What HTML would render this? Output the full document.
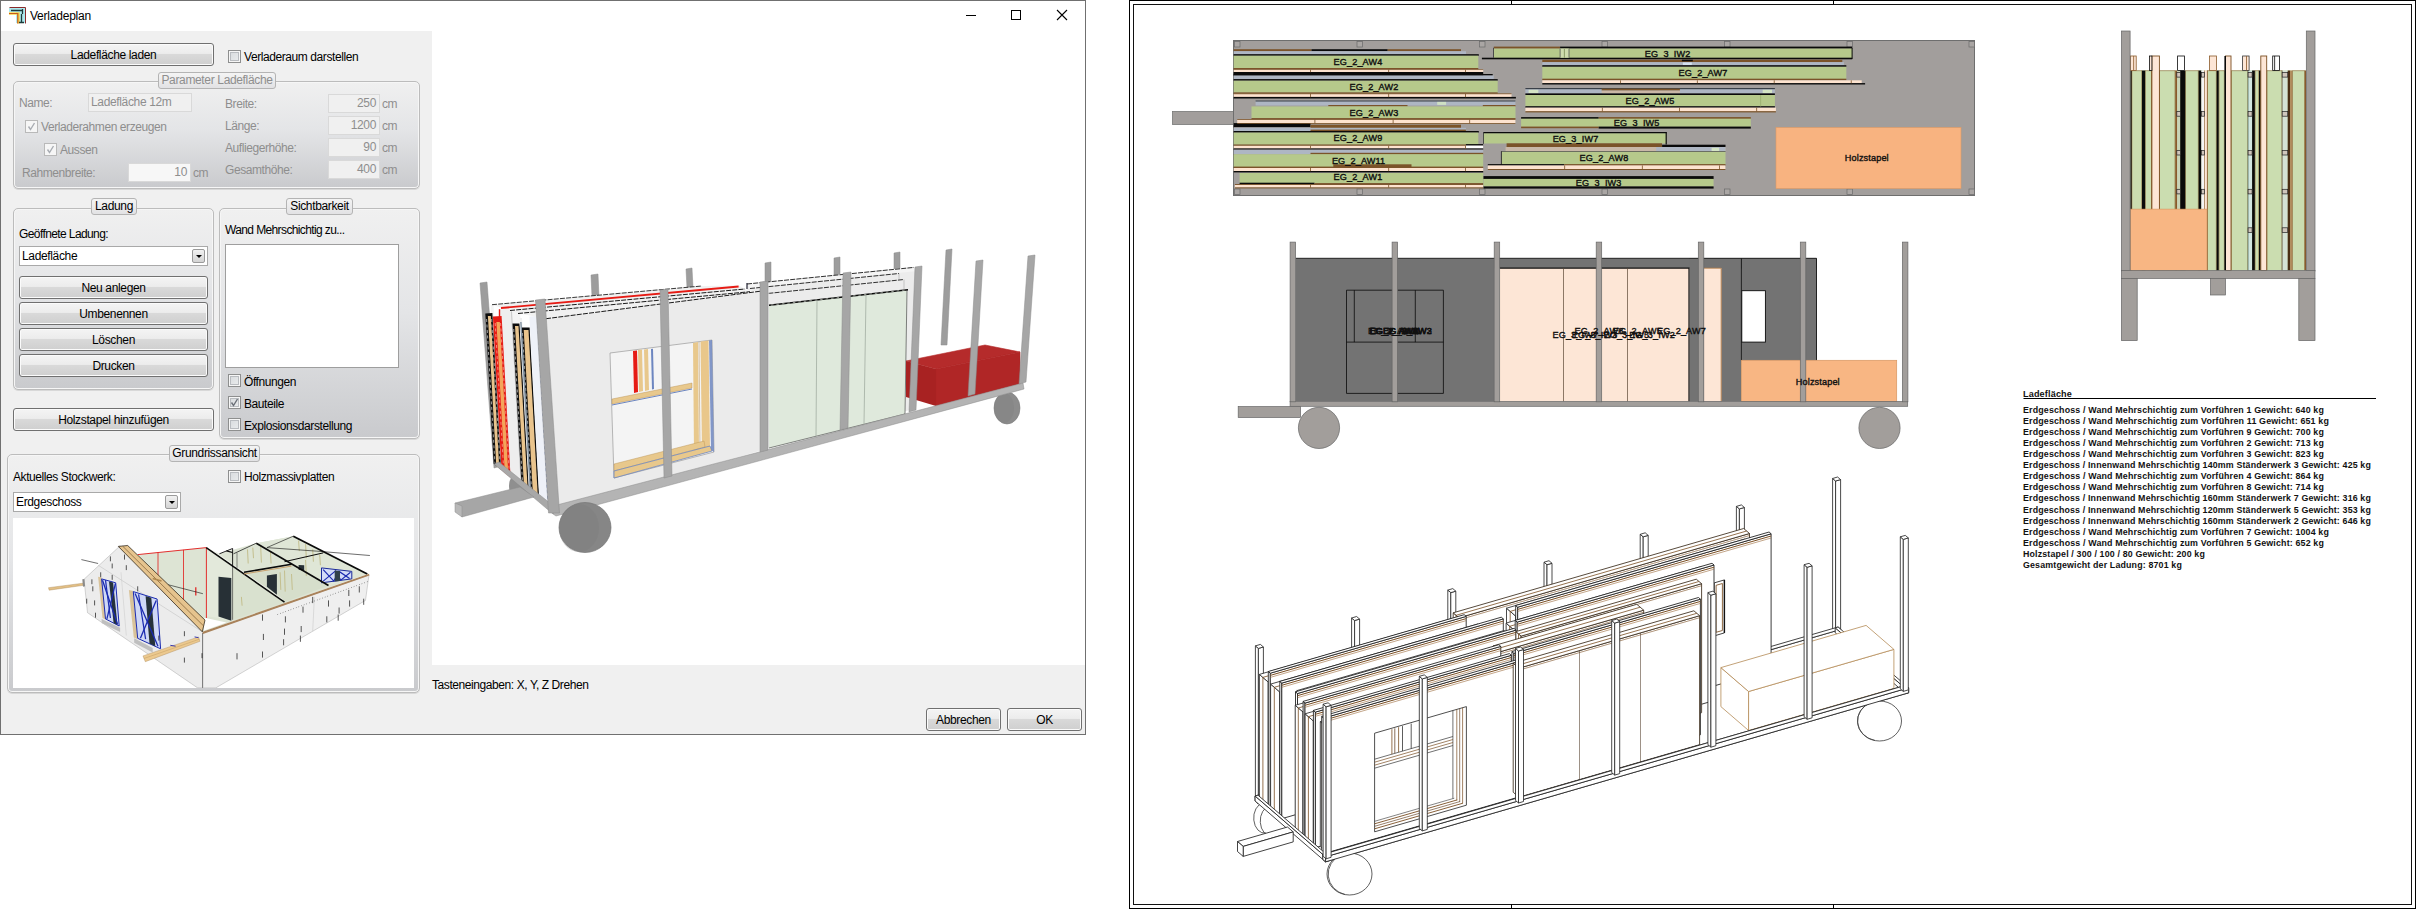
<!DOCTYPE html>
<html lang="de">
<head>
<meta charset="utf-8">
<title>Verladeplan</title>
<style>
html,body{margin:0;padding:0;background:#fff;}
body{width:2416px;height:909px;position:relative;overflow:hidden;font-family:"Liberation Sans",sans-serif;font-size:12px;color:#000;}
.abs{position:absolute;}
#dlg{position:absolute;left:0;top:0;width:1086px;height:735px;background:#fff;}
.bd{position:absolute;background:#707070;}
#title{position:absolute;left:30px;top:8px;font-size:12px;line-height:16px;white-space:nowrap;letter-spacing:-0.22px;}
#lpanel{position:absolute;left:1px;top:31px;width:431px;height:703px;background:#f0f0f0;}
#bpanel{position:absolute;left:432px;top:665px;width:653px;height:69px;background:#f0f0f0;}
.t{position:absolute;white-space:nowrap;font-size:12px;line-height:14px;letter-spacing:-0.42px;color:#000;}
.dis{color:#8e8e8e;}
.btn{position:absolute;box-sizing:border-box;border:1px solid #707070;border-radius:3px;
 background:linear-gradient(#f4f4f4 0%,#ececec 45%,#d9d9d9 50%,#cfcfcf 100%);
 box-shadow:inset 0 0 0 1px #fbfbfb;text-align:center;font-size:12px;letter-spacing:-0.35px;white-space:nowrap;}
.gb{position:absolute;box-sizing:border-box;border:1px solid #bcbcbc;border-radius:5px;
 background:linear-gradient(#f0f0f0 0%,#e4e5e7 45%,#c9cacd 100%);box-shadow:inset 0 0 0 1px #f6f6f6, 0 1px 0 #d8d8d8;}
.gl{position:absolute;box-sizing:border-box;border:1px solid #b4b4b4;border-radius:3px;background:linear-gradient(#f4f4f4,#e2e2e4);
 text-align:center;font-size:12px;line-height:15px;letter-spacing:-0.35px;white-space:nowrap;height:17px;}
.cb{position:absolute;width:13px;height:13px;box-sizing:border-box;border:1px solid #8e8f8f;background:linear-gradient(135deg,#d6d9dc,#eceeef);box-shadow:inset 0 0 0 1px #f6f6f6, inset 0 0 0 2px #b9bcc0;}
.cb.d{border-color:#b9b9b9;background:#f6f6f6;box-shadow:none;}
.tb{position:absolute;box-sizing:border-box;border:1px solid #d9d9d9;background:#f0f0f0;height:19px;font-size:12px;line-height:17px;letter-spacing:-0.35px;color:#8e8e8e;white-space:nowrap;}
.tb.r{text-align:right;padding-right:3px;}
.combo{position:absolute;box-sizing:border-box;border:1px solid #a9a9a9;background:#fff;height:20px;font-size:12px;line-height:19px;letter-spacing:-0.35px;padding-left:2px;white-space:nowrap;}
.combo i{position:absolute;right:2px;top:2px;width:13px;height:14px;box-sizing:border-box;border:1px solid #9a9a9a;border-radius:2px;background:linear-gradient(#f2f2f2,#d4d4d4);}
.combo i:after{content:"";position:absolute;left:3px;top:5px;border:3px solid transparent;border-top:3px solid #000;border-bottom:0;}
</style>
</head>
<body>
<div id="dlg">
 <div id="lpanel"></div>
 <div id="bpanel"></div>
 <svg class="abs" style="left:9px;top:7px" width="17" height="17" viewBox="0 0 17 17">
  <rect x="7" y="1" width="9" height="15" fill="#aee9ee"/><rect x="0" y="1" width="16" height="4" fill="#aee9ee"/>
  <path d="M0.5 0.5H16.5V16.5" fill="none" stroke="#8a2a2a" stroke-width="1"/>
  <path d="M0 6.5H9.5V16.5" fill="none" stroke="#f7d84a" stroke-width="2.4"/>
  <path d="M0 6.5H8.8V16.5" fill="none" stroke="#c65a1a" stroke-width="1.2"/>
  <path d="M2 3.5H14M13.5 2V7M12.5 7V16M10 15.5H15" fill="none" stroke="#1d3b3b" stroke-width="1.3"/>
 </svg>
 <div id="title">Verladeplan</div>
 <svg class="abs" style="left:961px;top:4px" width="120" height="22" viewBox="0 0 120 22">
  <path d="M5 11.5H15" stroke="#000" stroke-width="1"/>
  <rect x="50.5" y="6.5" width="9" height="9" fill="none" stroke="#000" stroke-width="1"/>
  <path d="M96 6L106 16M106 6L96 16" stroke="#000" stroke-width="1.1"/>
 </svg>

 <!-- top row -->
 <div class="btn" style="left:13px;top:43px;width:201px;height:23px;line-height:22px;">Ladefläche laden</div>
 <div class="cb" style="left:228px;top:50px"></div>
 <div class="t" style="left:244px;top:50px">Verladeraum darstellen</div>
 <!-- Parameter -->
 <div class="gb" style="left:13px;top:81px;width:407px;height:108px"></div>
 <div class="gl dis" style="left:158px;top:72px;width:118px;">Parameter Ladefläche</div>
 <div class="t dis" style="left:19px;top:96px">Name:</div>
 <div class="tb" style="left:88px;top:93px;width:104px;padding-left:2px;">Ladefläche 12m</div>
 <div class="cb d" style="left:25px;top:120px"></div>
 <svg class="abs" style="left:25px;top:120px" width="13" height="13"><path d="M3.5 6.5L5.5 9.5L9.5 3" fill="none" stroke="#a9adb3" stroke-width="1.4"/></svg>
 <div class="t dis" style="left:41px;top:120px">Verladerahmen erzeugen</div>
 <div class="cb d" style="left:44px;top:143px"></div>
 <svg class="abs" style="left:44px;top:143px" width="13" height="13"><path d="M3.5 6.5L5.5 9.5L9.5 3" fill="none" stroke="#a9adb3" stroke-width="1.4"/></svg>
 <div class="t dis" style="left:60px;top:143px">Aussen</div>
 <div class="t dis" style="left:22px;top:166px">Rahmenbreite:</div>
 <div class="tb r" style="left:128px;top:163px;width:63px;background:#f7f7f7">10</div>
 <div class="t dis" style="left:193px;top:166px">cm</div>
 <div class="t dis" style="left:225px;top:97px">Breite:</div>
 <div class="t dis" style="left:225px;top:119px">Länge:</div>
 <div class="t dis" style="left:225px;top:141px">Aufliegerhöhe:</div>
 <div class="t dis" style="left:225px;top:163px">Gesamthöhe:</div>
 <div class="tb r" style="left:328px;top:94px;width:52px;">250</div>
 <div class="tb r" style="left:328px;top:116px;width:52px;">1200</div>
 <div class="tb r" style="left:328px;top:138px;width:52px;">90</div>
 <div class="tb r" style="left:328px;top:160px;width:52px;">400</div>
 <div class="t dis" style="left:382px;top:97px">cm</div>
 <div class="t dis" style="left:382px;top:119px">cm</div>
 <div class="t dis" style="left:382px;top:141px">cm</div>
 <div class="t dis" style="left:382px;top:163px">cm</div>
 <!-- Ladung -->
 <div class="gb" style="left:13px;top:208px;width:201px;height:182px"></div>
 <div class="gl" style="left:91px;top:198px;width:46px;">Ladung</div>
 <div class="t" style="left:19px;top:227px;letter-spacing:-0.6px">Geöffnete Ladung:</div>
 <div class="combo" style="left:19px;top:246px;width:189px;">Ladefläche<i></i></div>
 <div class="btn" style="left:19px;top:276px;width:189px;height:23px;line-height:22px;">Neu anlegen</div>
 <div class="btn" style="left:19px;top:302px;width:189px;height:23px;line-height:22px;">Umbenennen</div>
 <div class="btn" style="left:19px;top:328px;width:189px;height:23px;line-height:22px;">Löschen</div>
 <div class="btn" style="left:19px;top:354px;width:189px;height:23px;line-height:22px;">Drucken</div>
 <div class="btn" style="left:13px;top:408px;width:201px;height:23px;line-height:22px;">Holzstapel hinzufügen</div>
 <!-- Sichtbarkeit -->
 <div class="gb" style="left:219px;top:208px;width:201px;height:231px"></div>
 <div class="gl" style="left:286px;top:198px;width:67px;">Sichtbarkeit</div>
 <div class="t" style="left:225px;top:223px;letter-spacing:-0.62px">Wand Mehrschichtig zu...</div>
 <div class="abs" style="left:225px;top:244px;width:174px;height:124px;box-sizing:border-box;border:1px solid #9e9e9e;background:#fff"></div>
 <div class="cb" style="left:228px;top:374px"></div>
 <div class="t" style="left:244px;top:375px">Öffnungen</div>
 <div class="cb" style="left:228px;top:396px"></div>
 <svg class="abs" style="left:228px;top:396px" width="13" height="13"><path d="M3.5 6.5L5.5 9.5L9.5 3" fill="none" stroke="#6a6f77" stroke-width="1.4"/></svg>
 <div class="t" style="left:244px;top:397px">Bauteile</div>
 <div class="cb" style="left:228px;top:418px"></div>
 <div class="t" style="left:244px;top:419px">Explosionsdarstellung</div>
 <!-- Grundrissansicht -->
 <div class="gb" style="left:7px;top:454px;width:413px;height:239px"></div>
 <div class="gl" style="left:169px;top:445px;width:91px;">Grundrissansicht</div>
 <div class="t" style="left:13px;top:470px">Aktuelles Stockwerk:</div>
 <div class="cb" style="left:228px;top:470px"></div>
 <div class="t" style="left:244px;top:470px">Holzmassivplatten</div>
 <div class="combo" style="left:13px;top:492px;width:168px;">Erdgeschoss<i></i></div>
 <div class="abs" id="thumb" style="left:13px;top:518px;width:401px;height:170px;background:#fff"></div>

 <!-- 3D trailer view -->
 <svg class="abs" style="left:432px;top:31px" width="653" height="634" viewBox="432 31 653 634">
  <g id="tr3d">
  <!-- far wheel (behind) -->
  <ellipse cx="521" cy="486" rx="12" ry="14" fill="#8f8f8f"/>
  <!-- far posts -->
  <g fill="#9d9d9d" stroke="#8a8a8a" stroke-width="0.5">
   <polygon points="480,283 487,282 501,466 494,468"/>
   <polygon points="591,275 598,274 599,297 592,297"/>
   <polygon points="686,269 692,268 693,288 687,288"/>
   <polygon points="765,263 771,262 771,284 765,284"/>
   <polygon points="834,258 840,257 840,284 834,284"/>
   <polygon points="894,253 900,252 900,277 894,277"/>
   <polygon points="946,250 952,249 947,345 941,345"/>
  </g>
  <!-- back panels stack left -->
  <polygon points="490.5,305.0 493.5,305.0 502.8,471.2 499.7,468.6" fill="#f4f4f4"/>
  <polygon points="485.3,313.6 492.4,313.0 501.2,469.8 493.7,463.8" fill="#0d0d0d"/>
  <polygon points="487.9,316.0 490.8,316.0 499.3,468.3 496.3,465.9" fill="#e9c48d"/>
  <path d="M486.6,319.0L494.9,462.8" stroke="#fff" stroke-width="0.6" stroke-dasharray="3 2.5" fill="none"/>
  <path d="M491.6,319.0L500.2,467.0" stroke="#fff" stroke-width="0.6" stroke-dasharray="3 2.5" fill="none"/>
  <polygon points="499.5,309.5 512.0,308.5 522.0,486.8 508.8,476.1" fill="#eeeeee"/>
  <polygon points="492.9,316.5 501.6,316.0 510.6,477.5 501.5,470.1" fill="#e61b14"/>
  <polygon points="496.4,322.0 499.8,322.0 508.4,475.7 504.8,472.8" fill="#f3a55a"/>
  <path d="M495.2,323.0L503.7,469.9" stroke="#ffd0c0" stroke-width="0.6" stroke-dasharray="3 2.5" fill="none"/>
  <path d="M500.6,323.0L509.4,474.5" stroke="#ffd0c0" stroke-width="0.6" stroke-dasharray="3 2.5" fill="none"/>
  <path d="M499.5,317V309.2" stroke="#e61b14" stroke-width="1.4"/>
  <polygon points="511.5,311.5 520.0,311.0 530.2,493.5 521.3,486.2" fill="#f4f4f4"/>
  <path d="M511.5,311.5L521.3,486.2" stroke="#9a9a9a" stroke-width="0.5"/>
  <polygon points="512.5,323.6 519.5,323.6 529.0,492.4 521.6,486.5" fill="#0d0d0d"/>
  <polygon points="515.0,326.0 518.5,326.0 527.8,491.5 524.1,488.5" fill="#e9c48d"/>
  <path d="M513.7,329.0L522.7,485.4" stroke="#fff" stroke-width="0.6" stroke-dasharray="3 2.5" fill="none"/>
  <polygon points="519.5,318.0 522.0,318.0 531.9,494.8 529.3,492.7" fill="#f0f0f0"/>
  <polygon points="521.5,327.5 529.6,327.5 539.3,500.9 530.8,494.0" fill="#0d0d0d"/>
  <polygon points="523.7,330.0 528.5,330.0 538.0,499.8 533.0,495.7" fill="#e9c48d"/>
  <path d="M522.5,333.0L531.7,492.7" stroke="#fff" stroke-width="0.6" stroke-dasharray="3 2.5" fill="none"/>
  <polygon points="520.2,322.0 521.6,322.0 531.2,494.3 529.8,493.1" fill="#8090a0"/>
  <polygon points="529.4,316.5 538.5,315.8 549.3,509.0 539.7,501.2" fill="#eef1f8"/>
  <polygon points="519.5,313.0 530.0,312.3 540.6,501.9 529.6,492.9" fill="#f3f3f3" opacity="0"/>
  <path d="M537.6,320.0L548.3,506.2" stroke="#5d77b8" stroke-width="1.1" stroke-dasharray="3 2.5" fill="none"/>
  <!-- top edges of stacked panels (left group) -->
  <polygon points="491.6,304.7 702,286 738.6,285.5 750,291.7 546,318.7 520,313.5" fill="#f1f1f1"/>
  <path d="M492,304.7L702,286" stroke="#222" stroke-width="0.9" stroke-dasharray="5 1.2" fill="none"/>
  <path d="M501,308L738.6,286.5" stroke="#e61b14" stroke-width="1.9" fill="none"/>
  <path d="M510,310.5L745,289M518,313.5L750,291.7" stroke="#1a1a1a" stroke-width="1" stroke-dasharray="5 1.2" fill="none"/>
  <!-- right back panels -->
  <polygon points="747,284 914,267 916,272 910,410 770,446 770,294 747,290" fill="#ececec"/>
  <polygon points="747,284 914,267 917,271 750,288.5" fill="#f4f4f4"/>
  <path d="M747,284L914,267.4M750,288.5L899,273.5" stroke="#1a1a1a" stroke-width="0.9" stroke-dasharray="5 1.2" fill="none"/>
  <path d="M747,283V289" stroke="#223" stroke-width="1.2"/>
  <path d="M768.4,293.4L904,279.5" stroke="#1a1a1a" stroke-width="0.9" stroke-dasharray="5 1.2" fill="none"/>
  <path d="M899,273.5L899,279M904,279.5L904,291" stroke="#aaa" stroke-width="0.6"/>
  
  <!-- main front white panel -->
  <polygon points="546,318.7 762,291 770,294 770,448 556,508" fill="#ebebeb"/>
  <path d="M546,318.7L762,291" stroke="#1a1a1a" stroke-width="1" stroke-dasharray="5 1.2"/>
  <!-- window opening -->
  <polygon points="610,353 712,340 714,452 614,478" fill="#f4f4f4" stroke="#8c8c8c" stroke-width="0.6"/>
  <polygon points="633,351 637,350.5 638,392 634,393" fill="#e61b14"/>
  <polygon points="638,350 642,349.5 643,391 639,392" fill="#e8c88c"/>
  <polygon points="644,349.5 648,349 649,390 645,391" fill="#e8c88c"/>
  <polygon points="651,349 653,348.7 654,389 652,389.5" fill="#6d86c0"/>
  <polygon points="612,399 692,383 692,388 612,404" fill="#e8c88c" stroke="#b48a4c" stroke-width="0.4"/>
  <path d="M612,405L692,389" stroke="#6d86c0" stroke-width="1"/>
  <polygon points="693,343 698,342 699,451 694,452" fill="#e8c88c"/>
  <polygon points="700.5,341.5 708.5,340.6 710,449 702,451" fill="#e9c78b"/>
  <path d="M699,342L700,451" stroke="#b48a4c" stroke-width="0.5"/>
  <polygon points="709,340.5 712,340 714,452 711,450" fill="#6d86c0" opacity="0.85"/>
  <polygon points="614,464 704,441 705,447 614,471" fill="#e8c88c" stroke="#b48a4c" stroke-width="0.4"/>
  <polygon points="614,471 710,446 712,451 614,478" fill="#e8c88c" stroke="#6d86c0" stroke-width="0.8"/>
  <!-- green panel -->
  <polygon points="769,305 907,290 905,414 769,448" fill="#dfe9dc"/>
  <path d="M769,305.3L908,289.8" stroke="#0a0a0a" stroke-width="1.6"/>
  <path d="M771,305.1L906,290" stroke="#e8eee4" stroke-width="0.6" stroke-dasharray="2.5 3"/>
  <path d="M907,290L905,414L769,448" stroke="#333" stroke-width="0.6" fill="none"/>
  <path d="M817,300L816,436M866,295L864,424" stroke="#9aa59a" stroke-width="0.7"/>
  <!-- red box -->
  <polygon points="906,361 985,345 1020,352 936,369" fill="#b52b2b" stroke="#b52b2b" stroke-width="0.6"/>
  <polygon points="936,369 1020,352 1020,384 936,406" fill="#b02626" stroke="#b02626" stroke-width="0.6"/>
  <polygon points="906,361 936,369 936,406 906,397" fill="#a82222"/>
  <!-- far wheel right -->
  <ellipse cx="1007" cy="408" rx="13" ry="16" fill="#8c8c8c" stroke="#7a7a7a" stroke-width="0.6"/>
  <ellipse cx="1004" cy="408" rx="10" ry="15" fill="#7d7d7d" opacity="0.35"/>
  <!-- deck rails -->
  <polygon points="553,506 1023,383 1024,389 556,516 553,514" fill="#b4b4b4" stroke="#8d8d8d" stroke-width="0.5"/>
  <polygon points="494,464 499,462 556,508 553,514" fill="#a8a8a8" stroke="#8d8d8d" stroke-width="0.5"/>
  <!-- drawbar -->
  <polygon points="455,503 520,487 534,497 462,517" fill="#a6a6a6" stroke="#8d8d8d" stroke-width="0.5"/>
  <polygon points="455,503 462,506 462,517 455,512" fill="#b8b8b8" stroke="#8d8d8d" stroke-width="0.5"/>
  <!-- near posts -->
  <g fill="#a6a6a6" stroke="#8b8b8b" stroke-width="0.5">
   <polygon points="535.5,300 545,299 559.5,513 548.5,513"/>
   <polygon points="660,290 668,289 672,476 664,478"/>
   <polygon points="760,282 768,281 768,450 760,452"/>
   <polygon points="843,273 851,272 848,428 840,430"/>
   <polygon points="915,267 922,266 916,410 909,412"/>
   <polygon points="976,261 983,260 975,394 968,396"/>
   <polygon points="1028,256 1035,255 1026,382 1019,384"/>
  </g>
  <!-- near wheel -->
  <ellipse cx="585" cy="527.5" rx="26" ry="25" fill="#868686" stroke="#747474" stroke-width="0.7"/>
  <ellipse cx="579" cy="528" rx="20" ry="24" fill="#7a7a7a" opacity="0.3"/>
  </g>
 </svg>
<!-- house thumbnail -->
<svg class="abs" style="left:13px;top:518px" width="401" height="170" viewBox="13 518 401 170">
<rect x="13" y="518" width="401" height="170" fill="#fff"/>
<polygon points="137.7,554.6 206.4,547.6 206.2,547.6 219.4,553.8 256.3,543.2 293.3,536.2 367.3,574.0 202.6,632.1 202.9,631.2" fill="#dde4d4" stroke="none" stroke-width="0.5"/>
<polygon points="206.2,547.6 232.6,567.0 232.6,619.8 206.2,616.3" fill="#e3e9db" stroke="none" stroke-width="0.5"/>
<polygon points="232.6,567.0 284.5,602.2 232.6,619.8" fill="#d9e1cf" stroke="none" stroke-width="0.5"/>
<polygon points="244.0,572.3 291.5,564.3 328.5,585.5 284.5,602.2" fill="#d6decb" stroke="none" stroke-width="0.5"/>
<polygon points="256.3,543.2 293.3,536.2 367.3,574.0 328.5,585.5" fill="#dfe6d6" stroke="none" stroke-width="0.5"/>
<polyline points="247.5,549.4 248.2,563.5" fill="none" stroke="#c4bf8e" stroke-width="1.0"/>
<polyline points="252.8,547.6 253.5,558.2" fill="none" stroke="#c4bf8e" stroke-width="1.0"/>
<polyline points="260.7,546.7 261.4,562.6" fill="none" stroke="#c4bf8e" stroke-width="1.0"/>
<polyline points="270.4,551.1 271.1,563.5" fill="none" stroke="#c4bf8e" stroke-width="1.0"/>
<polyline points="298.6,540.6 299.3,551.1" fill="none" stroke="#c4bf8e" stroke-width="1.0"/>
<polyline points="305.6,544.1 306.3,558.2" fill="none" stroke="#c4bf8e" stroke-width="1.0"/>
<polyline points="312.7,549.4 313.4,561.7" fill="none" stroke="#c4bf8e" stroke-width="1.0"/>
<polyline points="319.7,554.6 320.4,565.2" fill="none" stroke="#c4bf8e" stroke-width="1.0"/>
<polyline points="284.5,570.5 285.2,591.6" fill="none" stroke="#c4bf8e" stroke-width="1.0"/>
<polyline points="291.5,574.0 292.3,589.9" fill="none" stroke="#c4bf8e" stroke-width="1.0"/>
<polyline points="241.4,596.9 242.1,605.7" fill="none" stroke="#c4bf8e" stroke-width="1.0"/>
<polyline points="305.6,559.9 306.3,575.8" fill="none" stroke="#c4bf8e" stroke-width="1.0"/>
<polyline points="280.1,572.3 280.8,589.9" fill="none" stroke="#c4bf8e" stroke-width="1.0"/>
<polygon points="204.6,617.7 226.4,622.4 203.7,630.7" fill="#fff" stroke="none" stroke-width="0.5"/>
<polyline points="137.7,554.6 206.4,547.6 206.4,618.0" fill="none" stroke="#e21a1a" stroke-width="0.9"/>
<polyline points="158.0,552.5 158.0,582.8" fill="none" stroke="#e21a1a" stroke-width="0.8"/>
<polyline points="183.5,549.9 183.5,603.9" fill="none" stroke="#e21a1a" stroke-width="0.8"/>
<polyline points="195.8,587.2 195.8,595.5" fill="none" stroke="#e21a1a" stroke-width="1.2"/>
<polyline points="167.6,584.6 202.9,593.7" fill="none" stroke="#111" stroke-width="0.6"/>
<polygon points="218.5,576.7 231.3,577.9 231.3,620.7 218.5,616.6" fill="#273036" stroke="none" stroke-width="0.5"/>
<polygon points="266.9,575.4 276.9,574.0 276.9,594.8 266.9,586.7" fill="#273036" stroke="none" stroke-width="0.5"/>
<polygon points="298.6,564.9 304.2,565.2 304.2,570.8 298.6,569.8" fill="#273036" stroke="none" stroke-width="0.5"/>
<polygon points="321.5,567.9 351.8,571.4 351.8,578.9 321.5,582.8" fill="#d3dcf8" stroke="#1a2a9a" stroke-width="1.0"/>
<polyline points="323.2,569.6 333.8,581.1 339.1,571.4 349.6,578.4" fill="none" stroke="#1a2ab0" stroke-width="1.2"/>
<polyline points="323.2,581.1 335.6,570.8 340.8,580.2 350.5,572.3" fill="none" stroke="#1a2ab0" stroke-width="1.1"/>
<polygon points="334.7,570.5 340.0,571.0 340.0,581.1 334.7,581.6" fill="#30404a" stroke="none" stroke-width="0.5"/>
<polyline points="206.2,547.6 284.5,602.2" fill="none" stroke="#0a0a0a" stroke-width="1.6"/>
<polyline points="208.5,547.6 282.7,599.5" fill="none" stroke="#fff" stroke-width="0.5"/>
<polyline points="256.3,543.2 328.5,585.5" fill="none" stroke="#0a0a0a" stroke-width="1.6"/>
<polyline points="293.3,536.2 367.3,574.0" fill="none" stroke="#0a0a0a" stroke-width="1.8"/>
<polyline points="244.0,572.3 291.5,564.3" fill="none" stroke="#0a0a0a" stroke-width="1.6"/>
<polyline points="244.0,574.0 291.5,566.1" fill="none" stroke="#c79a62" stroke-width="0.9"/>
<polyline points="219.4,553.8 232.6,548.5 232.6,567.0" fill="none" stroke="#0a0a0a" stroke-width="0.9"/>
<polyline points="226.4,550.8 232.6,552.5" fill="none" stroke="#0a0a0a" stroke-width="1.2"/>
<polyline points="233.5,553.8 256.3,543.2" fill="none" stroke="#0a0a0a" stroke-width="0.7"/>
<polyline points="266.9,547.6 293.3,536.2" fill="none" stroke="#0a0a0a" stroke-width="0.6"/>
<polyline points="266.9,547.6 316.2,551.1 369.9,555.5" fill="none" stroke="#0a0a0a" stroke-width="0.6"/>
<polyline points="284.5,561.7 323.2,552.9" fill="none" stroke="#0a0a0a" stroke-width="1.0"/>
<polyline points="232.6,567.0 232.6,619.8" fill="none" stroke="#222" stroke-width="0.6"/>
<polyline points="237.0,552.9 237.0,567.9" fill="none" stroke="#222" stroke-width="0.5"/>
<polygon points="120.1,545.8 84.0,579.3 87.5,612.7 197.6,687.9 202.9,687.9 202.9,632.1" fill="#ececec" stroke="#9a9a9a" stroke-width="0.4"/>
<polyline points="98.1,565.2 202.9,632.1" fill="none" stroke="#bdbdbd" stroke-width="0.5"/>
<polyline points="121.0,572.3 126.3,635.6" fill="none" stroke="#c8c8c8" stroke-width="0.5"/>
<polygon points="202.6,633.0 369.0,574.9 365.5,600.4 215.8,687.9 202.6,687.9" fill="#efefef" stroke="#9a9a9a" stroke-width="0.4"/>
<polyline points="314.4,596.9 312.7,631.2" fill="none" stroke="#c2c2c2" stroke-width="0.5"/>
<polyline points="202.6,633.0 202.6,687.9" fill="none" stroke="#555" stroke-width="0.7"/>
<polygon points="202.6,631.8 369.0,573.7 369.4,575.4 203.0,633.9" fill="#a9825a" stroke="none" stroke-width="0.5"/>
<polygon points="118.3,546.4 127.7,545.5 205.0,620.1 202.3,631.8" fill="#e6c48e" stroke="#1a1208" stroke-width="0.7"/>
<polyline points="122.7,546.2 203.7,626.0" fill="none" stroke="#7a5a30" stroke-width="0.7"/>
<polyline points="152.7,578.4 161.5,581.1" fill="none" stroke="#b08850" stroke-width="1.6"/>
<polygon points="98.1,576.7 101.6,577.5 106.0,619.8 102.5,618.0" fill="#d9c39a" stroke="none" stroke-width="0.5"/>
<polygon points="101.6,578.9 115.7,582.8 119.2,626.0 105.5,618.9" fill="#cfd8f6" stroke="#1a2ab0" stroke-width="1.0"/>
<polygon points="109.0,581.4 113.1,582.5 117.5,625.1 113.6,623.0" fill="#26323a" stroke="none" stroke-width="0.5"/>
<polyline points="102.5,580.2 117.5,624.2" fill="none" stroke="#1a2ab0" stroke-width="1.3"/>
<polyline points="115.4,583.7 106.9,618.9" fill="none" stroke="#1a2ab0" stroke-width="1.3"/>
<polyline points="105.5,580.2 110.4,618.0" fill="none" stroke="#1a2ab0" stroke-width="1.2"/>
<polygon points="101.6,618.9 120.1,627.7 120.1,632.1 101.6,623.0" fill="#bfbfbf" stroke="none" stroke-width="0.5"/>
<polygon points="128.9,589.9 133.3,591.1 137.7,639.2 133.8,637.4" fill="#d9c39a" stroke="none" stroke-width="0.5"/>
<polygon points="133.3,591.6 157.1,599.0 160.6,648.8 137.7,638.3" fill="#cfd8f6" stroke="#1a2ab0" stroke-width="1.0"/>
<polygon points="145.6,596.0 151.3,597.8 155.3,646.2 149.5,643.6" fill="#26323a" stroke="none" stroke-width="0.5"/>
<polyline points="135.1,593.4 158.0,646.2" fill="none" stroke="#1a2ab0" stroke-width="1.3"/>
<polyline points="156.2,600.4 140.4,638.3" fill="none" stroke="#1a2ab0" stroke-width="1.3"/>
<polyline points="138.6,594.3 145.6,639.2" fill="none" stroke="#1a2ab0" stroke-width="1.2"/>
<polygon points="134.2,638.3 152.7,648.0 152.7,652.4 134.2,642.7" fill="#bfbfbf" stroke="none" stroke-width="0.5"/>
<polyline points="110.4,556.4 110.4,561.3" fill="none" stroke="#111" stroke-width="0.7"/>
<polyline points="112.2,563.5 112.2,568.4" fill="none" stroke="#111" stroke-width="0.7"/>
<polyline points="124.5,554.6 124.5,559.6" fill="none" stroke="#111" stroke-width="0.7"/>
<polyline points="126.3,565.2 126.3,570.1" fill="none" stroke="#111" stroke-width="0.7"/>
<polyline points="100.7,572.3 100.7,577.2" fill="none" stroke="#111" stroke-width="0.7"/>
<polyline points="112.2,574.9 112.2,579.8" fill="none" stroke="#111" stroke-width="0.7"/>
<polyline points="91.9,579.3 91.9,584.2" fill="none" stroke="#111" stroke-width="0.7"/>
<polyline points="92.8,586.3 92.8,591.3" fill="none" stroke="#111" stroke-width="0.7"/>
<polyline points="94.6,600.4 94.6,605.4" fill="none" stroke="#111" stroke-width="0.7"/>
<polyline points="95.5,612.7 95.5,617.7" fill="none" stroke="#111" stroke-width="0.7"/>
<polyline points="137.7,586.3 137.7,591.3" fill="none" stroke="#111" stroke-width="0.7"/>
<polyline points="158.8,635.6 158.8,640.6" fill="none" stroke="#111" stroke-width="0.7"/>
<polyline points="184.4,631.2 184.4,636.2" fill="none" stroke="#111" stroke-width="0.7"/>
<polyline points="184.4,657.6 184.4,662.6" fill="none" stroke="#111" stroke-width="0.7"/>
<polyline points="202.0,653.2 202.0,658.2" fill="none" stroke="#111" stroke-width="0.7"/>
<polyline points="86.7,598.7 86.7,603.6" fill="none" stroke="#111" stroke-width="0.7"/>
<polyline points="237.0,653.2 237.0,659.4" fill="none" stroke="#111" stroke-width="0.7"/>
<polyline points="262.5,651.5 262.5,657.6" fill="none" stroke="#111" stroke-width="0.7"/>
<polyline points="263.4,633.9 263.4,640.0" fill="none" stroke="#111" stroke-width="0.7"/>
<polyline points="283.6,639.2 283.6,645.3" fill="none" stroke="#111" stroke-width="0.7"/>
<polyline points="284.5,628.6 284.5,634.8" fill="none" stroke="#111" stroke-width="0.7"/>
<polyline points="300.4,635.6 300.4,641.8" fill="none" stroke="#111" stroke-width="0.7"/>
<polyline points="301.2,626.0 301.2,632.1" fill="none" stroke="#111" stroke-width="0.7"/>
<polyline points="285.4,616.3 285.4,622.4" fill="none" stroke="#111" stroke-width="0.7"/>
<polyline points="303.0,606.6 303.0,612.7" fill="none" stroke="#111" stroke-width="0.7"/>
<polyline points="328.5,600.4 328.5,606.6" fill="none" stroke="#111" stroke-width="0.7"/>
<polyline points="326.8,616.3 326.8,622.4" fill="none" stroke="#111" stroke-width="0.7"/>
<polyline points="339.1,607.5 339.1,613.6" fill="none" stroke="#111" stroke-width="0.7"/>
<polyline points="338.2,614.5 338.2,620.7" fill="none" stroke="#111" stroke-width="0.7"/>
<polyline points="349.6,600.4 349.6,606.6" fill="none" stroke="#111" stroke-width="0.7"/>
<polyline points="348.8,589.9 348.8,596.0" fill="none" stroke="#111" stroke-width="0.7"/>
<polyline points="359.3,586.3 359.3,592.5" fill="none" stroke="#111" stroke-width="0.7"/>
<polyline points="363.7,598.7 363.7,604.8" fill="none" stroke="#111" stroke-width="0.7"/>
<polyline points="262.5,614.5 262.5,620.7" fill="none" stroke="#111" stroke-width="0.7"/>
<polyline points="312.7,596.9 312.7,603.1" fill="none" stroke="#111" stroke-width="0.7"/>
<polyline points="277.5,614.5 369.0,581.1" fill="none" stroke="#222" stroke-width="0.7" stroke-dasharray="0.6 2.2"/>
<polygon points="48.5,587.7 83.1,583.2 83.7,585.3 49.2,590.2" fill="#e2bf85" stroke="#a88654" stroke-width="0.4"/>
<polygon points="82.3,579.3 84.4,578.9 85.1,586.3 83.0,586.7" fill="#8a8a8a" stroke="none" stroke-width="0.5"/>
<polygon points="143.0,655.9 198.5,636.9 199.9,641.3 145.3,661.7" fill="#ecc98f" stroke="#a88654" stroke-width="0.4"/>
<polyline points="143.9,658.5 199.3,639.2" fill="none" stroke="#c9a468" stroke-width="0.6"/>
<polyline points="170.3,645.3 175.6,646.2" fill="none" stroke="#3a3ab0" stroke-width="1.0"/>
<polyline points="194.6,636.9 198.5,637.7" fill="none" stroke="#3a3ab0" stroke-width="1.0"/>
<polyline points="81.4,559.6 98.1,563.5" fill="none" stroke="#111" stroke-width="0.6"/>
</svg>
 <!-- bottom -->
 <div class="t" style="left:432px;top:678px">Tasteneingaben: X, Y, Z Drehen</div>
 <div class="btn" style="left:926px;top:708px;width:75px;height:23px;line-height:22px;">Abbrechen</div>
 <div class="btn" style="left:1007px;top:708px;width:75px;height:23px;line-height:22px;">OK</div>
 <div class="bd" style="left:0;top:0;width:1086px;height:1px"></div>
 <div class="bd" style="left:0;top:0;width:1px;height:735px"></div>
 <div class="bd" style="left:1085px;top:0;width:1px;height:735px"></div>
 <div class="bd" style="left:0;top:734px;width:1086px;height:1px"></div>
</div>
<!-- sheet frame + plan -->
<svg class="abs" style="left:1120px;top:0" width="1296" height="909" viewBox="1120 0 1296 909" font-family="Liberation Sans, sans-serif">
<rect x="1129.5" y="0.5" width="1286" height="908" fill="#fff" stroke="#000" stroke-width="1"/>
<rect x="1133.5" y="4.5" width="1278" height="900" fill="none" stroke="#111" stroke-width="1"/>
<path d="M1511.5 0V4M1833.5 0V4M1511.5 904V908M1833.5 904V908" stroke="#000" stroke-width="1"/>
<g id="plan">
<rect x="1172.5" y="111.5" width="61.5" height="13.0" fill="#a29e9c" stroke="#777" stroke-width="0.8"/>
<rect x="1233.5" y="40.5" width="741.0" height="155.0" fill="#a29e9c" stroke="#6e6e6e" stroke-width="1"/>
<rect x="1234.5" y="41.5" width="5.5" height="5.5" fill="#aaa6a4" stroke="#6a6a6a" stroke-width="0.7"/>
<rect x="1234.5" y="189.0" width="5.5" height="5.5" fill="#aaa6a4" stroke="#6a6a6a" stroke-width="0.7"/>
<rect x="1357.0" y="41.5" width="5.5" height="5.5" fill="#aaa6a4" stroke="#6a6a6a" stroke-width="0.7"/>
<rect x="1357.0" y="189.0" width="5.5" height="5.5" fill="#aaa6a4" stroke="#6a6a6a" stroke-width="0.7"/>
<rect x="1479.5" y="41.5" width="5.5" height="5.5" fill="#aaa6a4" stroke="#6a6a6a" stroke-width="0.7"/>
<rect x="1479.5" y="189.0" width="5.5" height="5.5" fill="#aaa6a4" stroke="#6a6a6a" stroke-width="0.7"/>
<rect x="1602.0" y="41.5" width="5.5" height="5.5" fill="#aaa6a4" stroke="#6a6a6a" stroke-width="0.7"/>
<rect x="1602.0" y="189.0" width="5.5" height="5.5" fill="#aaa6a4" stroke="#6a6a6a" stroke-width="0.7"/>
<rect x="1724.5" y="41.5" width="5.5" height="5.5" fill="#aaa6a4" stroke="#6a6a6a" stroke-width="0.7"/>
<rect x="1724.5" y="189.0" width="5.5" height="5.5" fill="#aaa6a4" stroke="#6a6a6a" stroke-width="0.7"/>
<rect x="1847.0" y="41.5" width="5.5" height="5.5" fill="#aaa6a4" stroke="#6a6a6a" stroke-width="0.7"/>
<rect x="1847.0" y="189.0" width="5.5" height="5.5" fill="#aaa6a4" stroke="#6a6a6a" stroke-width="0.7"/>
<rect x="1969.0" y="41.5" width="5.5" height="5.5" fill="#aaa6a4" stroke="#6a6a6a" stroke-width="0.7"/>
<rect x="1969.0" y="189.0" width="5.5" height="5.5" fill="#aaa6a4" stroke="#6a6a6a" stroke-width="0.7"/>
<rect x="1233.7" y="49.2" width="77.8" height="2.0" fill="#7b5329"/>
<rect x="1311.5" y="49.2" width="76.2" height="2.0" fill="#0a0a0a"/>
<rect x="1387.7" y="49.2" width="73.3" height="2.0" fill="#7b5329"/>
<rect x="1233.7" y="51.2" width="232.3" height="3.0" fill="#aeb6c3"/>
<rect x="1233.7" y="54.2" width="245.1" height="1.6" fill="#0a0a0a"/>
<rect x="1233.7" y="55.7" width="244.6" height="12.5" fill="#b6c98b"/>
<rect x="1233.7" y="68.0" width="244.6" height="1.6" fill="#7b5329"/>
<rect x="1233.7" y="69.6" width="249.5" height="2.6" fill="#fde3cf"/>
<rect x="1233.7" y="72.0" width="249.5" height="3.6" fill="#0a0a0a"/>
<rect x="1233.7" y="69.2" width="249.5" height="0.6" fill="#7b5329"/>
<rect x="1233.7" y="74.0" width="259.0" height="1.6" fill="#0a0a0a"/>
<rect x="1233.7" y="75.5" width="260.0" height="3.6" fill="#aeb6c3"/>
<rect x="1233.7" y="79.1" width="264.0" height="1.6" fill="#0a0a0a"/>
<rect x="1233.7" y="80.7" width="264.0" height="11.9" fill="#b6c98b"/>
<rect x="1233.7" y="92.4" width="264.0" height="1.4" fill="#7b5329"/>
<rect x="1233.7" y="93.8" width="277.8" height="3.4" fill="#fde3cf"/>
<rect x="1233.7" y="93.4" width="277.8" height="0.8" fill="#7b5329"/>
<rect x="1233.7" y="96.9" width="282.2" height="1.6" fill="#0a0a0a"/>
<rect x="1255.6" y="100.9" width="259.8" height="4.6" fill="#aeb6c3"/>
<rect x="1255.6" y="100.5" width="259.8" height="1.0" fill="#3a4048"/>
<rect x="1328.3" y="105.0" width="79.2" height="1.4" fill="#7b5329"/>
<rect x="1482.8" y="105.0" width="32.7" height="1.4" fill="#7b5329"/>
<rect x="1437.2" y="101.9" width="8.9" height="3.0" fill="#cfe0c4"/>
<rect x="1251.5" y="106.4" width="264.0" height="11.9" fill="#b6c98b"/>
<rect x="1251.5" y="118.1" width="264.0" height="1.4" fill="#7b5329"/>
<rect x="1237.2" y="119.5" width="278.2" height="3.8" fill="#fde3cf"/>
<rect x="1237.2" y="119.1" width="278.2" height="0.8" fill="#7b5329"/>
<rect x="1233.7" y="123.1" width="76.8" height="4.0" fill="#0a0a0a"/>
<rect x="1310.5" y="124.7" width="150.5" height="3.2" fill="#7b5329"/>
<rect x="1237.2" y="123.1" width="278.2" height="0.8" fill="#7b5329"/>
<rect x="1233.7" y="127.8" width="232.3" height="3.4" fill="#aeb6c3"/>
<rect x="1310.5" y="129.6" width="155.4" height="1.8" fill="#7b5329"/>
<rect x="1233.7" y="131.0" width="245.1" height="1.6" fill="#0a0a0a"/>
<rect x="1233.7" y="132.6" width="244.6" height="12.1" fill="#b6c98b"/>
<rect x="1233.7" y="144.5" width="232.3" height="1.4" fill="#7b5329"/>
<rect x="1465.9" y="144.1" width="17.2" height="1.6" fill="#0a0a0a"/>
<rect x="1233.7" y="145.8" width="232.3" height="2.8" fill="#fde3cf"/>
<rect x="1465.9" y="145.6" width="17.2" height="3.0" fill="#ffffff"/>
<rect x="1233.7" y="148.4" width="249.5" height="1.2" fill="#0a0a0a"/>
<rect x="1233.7" y="149.8" width="249.5" height="4.2" fill="#aeb6c3"/>
<rect x="1310.5" y="152.8" width="172.7" height="1.6" fill="#7b5329"/>
<rect x="1233.7" y="154.2" width="249.5" height="12.7" fill="#b6c98b"/>
<rect x="1333.3" y="164.3" width="78.2" height="2.8" fill="#7b5329"/>
<rect x="1233.7" y="166.6" width="249.5" height="1.6" fill="#7b5329"/>
<rect x="1233.7" y="168.0" width="249.5" height="3.2" fill="#fde3cf"/>
<rect x="1233.7" y="171.0" width="249.5" height="1.4" fill="#0a0a0a"/>
<rect x="1239.6" y="173.0" width="243.6" height="10.1" fill="#b6c98b"/>
<rect x="1239.6" y="182.7" width="74.9" height="1.4" fill="#0a0a0a"/>
<rect x="1314.5" y="183.1" width="168.7" height="1.2" fill="#7b5329"/>
<rect x="1234.9" y="184.1" width="248.3" height="1.2" fill="#7b5329"/>
<rect x="1234.9" y="185.0" width="248.3" height="2.6" fill="#fde3cf"/>
<rect x="1234.9" y="187.4" width="248.3" height="1.0" fill="#7b5329"/>
<rect x="1310.1" y="69.6" width="0.8" height="2.6" fill="#7b5329"/>
<rect x="1388.3" y="69.6" width="0.8" height="2.6" fill="#7b5329"/>
<rect x="1465.0" y="69.6" width="0.8" height="2.6" fill="#7b5329"/>
<rect x="1310.1" y="93.8" width="0.8" height="3.4" fill="#7b5329"/>
<rect x="1388.3" y="93.8" width="0.8" height="3.4" fill="#7b5329"/>
<rect x="1465.0" y="93.8" width="0.8" height="3.4" fill="#7b5329"/>
<rect x="1314.5" y="119.5" width="0.8" height="3.8" fill="#7b5329"/>
<rect x="1392.7" y="119.5" width="0.8" height="3.8" fill="#7b5329"/>
<rect x="1469.3" y="119.5" width="0.8" height="3.8" fill="#7b5329"/>
<rect x="1310.1" y="145.8" width="0.8" height="2.8" fill="#7b5329"/>
<rect x="1388.3" y="145.8" width="0.8" height="2.8" fill="#7b5329"/>
<rect x="1465.0" y="145.8" width="0.8" height="2.8" fill="#7b5329"/>
<rect x="1310.1" y="168.0" width="0.8" height="3.2" fill="#7b5329"/>
<rect x="1388.3" y="168.0" width="0.8" height="3.2" fill="#7b5329"/>
<rect x="1465.0" y="168.0" width="0.8" height="3.2" fill="#7b5329"/>
<rect x="1310.1" y="185.0" width="0.8" height="2.6" fill="#7b5329"/>
<rect x="1388.3" y="185.0" width="0.8" height="2.6" fill="#7b5329"/>
<rect x="1465.0" y="185.0" width="0.8" height="2.6" fill="#7b5329"/>
<rect x="1493.8" y="46.6" width="66.3" height="2.0" fill="#7b5329"/>
<rect x="1560.1" y="46.6" width="292.1" height="2.0" fill="#0a0a0a"/>
<rect x="1493.8" y="48.6" width="358.4" height="9.3" fill="#b6c98b"/>
<rect x="1481.9" y="57.7" width="370.3" height="1.6" fill="#0a0a0a"/>
<rect x="1560.1" y="48.6" width="8.9" height="9.1" fill="#cfdcae"/>
<rect x="1559.7" y="48.6" width="0.8" height="9.1" fill="#555"/>
<rect x="1568.6" y="48.6" width="0.8" height="9.1" fill="#555"/>
<rect x="1563.9" y="49.0" width="0.8" height="8.7" fill="#7a8a55"/>
<rect x="1493.0" y="47.8" width="1.0" height="10.1" fill="#4a4a4a"/>
<rect x="1851.6" y="47.8" width="1.0" height="11.1" fill="#0a0a0a"/>
<rect x="1542.3" y="59.7" width="300.0" height="2.6" fill="#7b5329"/>
<rect x="1681.9" y="59.7" width="10.9" height="1.6" fill="#0a0a0a"/>
<rect x="1542.3" y="62.1" width="301.6" height="3.4" fill="#aeb6c3"/>
<rect x="1682.9" y="62.5" width="8.9" height="2.6" fill="#d5e2f0"/>
<rect x="1542.3" y="65.2" width="304.0" height="1.6" fill="#0a0a0a"/>
<rect x="1542.3" y="66.8" width="304.0" height="12.1" fill="#b6c98b"/>
<rect x="1542.3" y="78.7" width="304.0" height="1.6" fill="#7b5329"/>
<rect x="1542.3" y="80.3" width="319.4" height="3.0" fill="#fde3cf"/>
<rect x="1542.3" y="83.1" width="322.8" height="1.4" fill="#0a0a0a"/>
<rect x="1620.1" y="80.3" width="0.8" height="3.0" fill="#7b5329"/>
<rect x="1696.9" y="80.3" width="0.8" height="3.0" fill="#7b5329"/>
<rect x="1773.8" y="80.3" width="0.8" height="3.0" fill="#7b5329"/>
<rect x="1850.8" y="80.3" width="0.8" height="3.0" fill="#7b5329"/>
<rect x="1525.4" y="88.6" width="249.5" height="5.0" fill="#aeb6c3"/>
<rect x="1525.4" y="88.0" width="249.5" height="1.2" fill="#3a4048"/>
<rect x="1601.7" y="88.6" width="78.2" height="2.0" fill="#7b5329"/>
<rect x="1601.7" y="90.6" width="78.2" height="2.8" fill="#c9b6a6"/>
<rect x="1528.6" y="89.8" width="9.7" height="3.2" fill="#d4e4c4"/>
<rect x="1762.7" y="89.8" width="9.3" height="3.2" fill="#d4e4c4"/>
<rect x="1525.4" y="93.4" width="249.5" height="1.6" fill="#0a0a0a"/>
<rect x="1525.4" y="95.0" width="249.5" height="11.5" fill="#b6c98b"/>
<rect x="1525.4" y="106.2" width="249.5" height="1.6" fill="#0a0a0a"/>
<rect x="1525.4" y="107.6" width="250.5" height="3.8" fill="#fde3cf"/>
<rect x="1525.4" y="111.2" width="250.5" height="1.2" fill="#7b5329"/>
<rect x="1601.9" y="107.6" width="0.8" height="3.8" fill="#7b5329"/>
<rect x="1679.1" y="107.6" width="0.8" height="3.8" fill="#7b5329"/>
<rect x="1756.3" y="107.6" width="0.8" height="3.8" fill="#7b5329"/>
<rect x="1760.3" y="95.0" width="0.8" height="11.5" fill="#9aae70"/>
<rect x="1521.1" y="117.1" width="77.6" height="1.8" fill="#0a0a0a"/>
<rect x="1598.7" y="117.1" width="152.1" height="1.8" fill="#7b5329"/>
<rect x="1521.1" y="118.7" width="229.7" height="8.1" fill="#b6c98b"/>
<rect x="1521.1" y="126.6" width="77.6" height="1.6" fill="#7b5329"/>
<rect x="1598.7" y="126.6" width="152.1" height="2.0" fill="#0a0a0a"/>
<rect x="1483.5" y="132.0" width="183.0" height="1.6" fill="#0a0a0a"/>
<rect x="1483.5" y="133.4" width="183.0" height="10.1" fill="#b6c98b"/>
<rect x="1506.6" y="143.3" width="155.4" height="3.8" fill="#7b5329"/>
<rect x="1662.1" y="144.7" width="63.4" height="2.4" fill="#0a0a0a"/>
<rect x="1483.1" y="132.0" width="0.8" height="11.9" fill="#333"/>
<rect x="1665.6" y="132.0" width="1.2" height="12.5" fill="#0a0a0a"/>
<rect x="1505.6" y="147.0" width="219.8" height="4.4" fill="#c9b8a8"/>
<rect x="1656.1" y="147.0" width="69.3" height="4.4" fill="#aeb6c3"/>
<rect x="1711.6" y="147.8" width="7.5" height="3.2" fill="#d4e4c4"/>
<rect x="1501.3" y="151.2" width="224.2" height="0.8" fill="#444"/>
<rect x="1501.3" y="151.8" width="224.2" height="12.7" fill="#b6c98b"/>
<rect x="1500.9" y="151.2" width="1.0" height="13.3" fill="#333"/>
<rect x="1487.8" y="164.1" width="76.2" height="1.6" fill="#0a0a0a"/>
<rect x="1564.1" y="164.1" width="161.4" height="1.6" fill="#7b5329"/>
<rect x="1487.8" y="165.4" width="237.6" height="3.8" fill="#fde3cf"/>
<rect x="1487.8" y="169.0" width="237.6" height="1.0" fill="#7b5329"/>
<rect x="1564.3" y="165.4" width="0.8" height="3.8" fill="#7b5329"/>
<rect x="1641.9" y="165.4" width="0.8" height="3.8" fill="#7b5329"/>
<rect x="1719.1" y="165.4" width="0.8" height="3.8" fill="#7b5329"/>
<rect x="1483.5" y="176.1" width="230.1" height="3.0" fill="#0a0a0a"/>
<rect x="1483.5" y="178.9" width="230.1" height="7.7" fill="#b6c98b"/>
<rect x="1483.5" y="186.4" width="230.1" height="2.2" fill="#0a0a0a"/>
<rect x="1776.0" y="127.5" width="185.0" height="61.0" fill="#f8b380" stroke="#e09a62" stroke-width="0.6"/>
</g>
<g font-size="9.1" fill="#101010" stroke="#101010" stroke-width="0.38" text-anchor="middle" letter-spacing="0.15">
<text x="1358" y="65">EG_2_AW4</text>
<text x="1374" y="90">EG_2_AW2</text>
<text x="1374" y="116">EG_2_AW3</text>
<text x="1358" y="141">EG_2_AW9</text>
<text x="1358.6" y="164">EG_2_AW11</text>
<text x="1358" y="180">EG_2_AW1</text>
<text x="1667.6" y="57">EG_3_IW2</text>
<text x="1703" y="76">EG_2_AW7</text>
<text x="1650" y="104">EG_2_AW5</text>
<text x="1636.7" y="126">EG_3_IW5</text>
<text x="1575.5" y="141.7">EG_3_IW7</text>
<text x="1604" y="161">EG_2_AW8</text>
<text x="1598.7" y="185.7">EG_3_IW3</text>
<text x="1866.8" y="161">Holzstapel</text>
</g>
<!--PLAN_END-->
</svg>
<!-- side elevation, end view, list -->
<svg class="abs" style="left:1120px;top:0" width="1296" height="909" viewBox="1120 0 1296 909" font-family="Liberation Sans, sans-serif">
<g id="elev">
<rect x="1295.6" y="258.3" width="198.9" height="143.2" fill="#737373"/>
<rect x="1494.5" y="258.3" width="322.0" height="10.2" fill="#737373"/>
<rect x="1689.3" y="258.3" width="52.1" height="143.2" fill="#737373"/>
<rect x="1741.4" y="258.3" width="75.1" height="102.2" fill="#737373"/>
<path d="M1295.6 258.3H1816.5V360.3" fill="none" stroke="#111" stroke-width="0.9"/>
<rect x="1499.8" y="268.0" width="189.5" height="133.5" fill="#fde6d6"/>
<path d="M1499.8 268.2H1689V401.5" fill="none" stroke="#111" stroke-width="1.2"/>
<path d="M1563.5 268V401.5M1627.5 268V401.5" stroke="#5a4634" stroke-width="0.7"/>
<rect x="1703.9" y="268.0" width="17.5" height="133.5" fill="#fde6d6"/>
<path d="M1703.9 268.2H1721.2V401.5" fill="none" stroke="#b07a4a" stroke-width="0.9"/>
<path d="M1346.5 290.2H1443.4V393.4H1346.5ZM1354.3 290.2V342.1M1415.3 290.2V342.1M1346.5 342.1H1443.4" fill="none" stroke="#0a0a0a" stroke-width="0.8"/>
<path d="M1741.4 258.3V360.3" stroke="#111" stroke-width="0.9"/>
<rect x="1741.8" y="290.7" width="23.6" height="51.4" fill="#fff" stroke="#0a0a0a" stroke-width="0.9"/>
<rect x="1741.4" y="360.3" width="155.3" height="41.2" fill="#f8b683" stroke="#d89660" stroke-width="0.7"/>
<rect x="1238.2" y="406.6" width="62.3" height="10.9" fill="#a29e9b" stroke="#666" stroke-width="0.7"/>
<circle cx="1319" cy="427.9" r="20.6" fill="#a29e9b" stroke="#666" stroke-width="0.7"/>
<circle cx="1879.5" cy="427.9" r="20.6" fill="#a29e9b" stroke="#666" stroke-width="0.7"/>
<rect x="1290.1" y="401.5" width="617.6" height="4.8" fill="#a29e9b" stroke="#666" stroke-width="0.7"/>
<rect x="1290.1" y="242.1" width="5.5" height="159.7" fill="#a29e9b" stroke="#666" stroke-width="0.7"/>
<rect x="1392.1" y="242.1" width="5.5" height="159.7" fill="#a29e9b" stroke="#666" stroke-width="0.7"/>
<rect x="1494.2" y="242.1" width="5.5" height="159.7" fill="#a29e9b" stroke="#666" stroke-width="0.7"/>
<rect x="1596.2" y="242.1" width="5.5" height="159.7" fill="#a29e9b" stroke="#666" stroke-width="0.7"/>
<rect x="1698.3" y="242.1" width="5.5" height="159.7" fill="#a29e9b" stroke="#666" stroke-width="0.7"/>
<rect x="1800.3" y="242.1" width="5.5" height="159.7" fill="#a29e9b" stroke="#666" stroke-width="0.7"/>
<rect x="1902.4" y="242.1" width="5.5" height="159.7" fill="#a29e9b" stroke="#666" stroke-width="0.7"/>
</g>
<g font-size="9.1" fill="#101010" stroke="#101010" stroke-width="0.38" text-anchor="middle" letter-spacing="0.15">
<text x="1394.1" y="334">EG_2_AW4</text>
<text x="1407.5" y="334">EG_2_AW3</text>
<text x="1407.5" y="334">EG_2_AW2</text>
<text x="1394.1" y="334">EG_2_AW9</text>
<text x="1394.6" y="334">EG_2_AW11</text>
<text x="1394.1" y="334">EG_2_AW1</text>
<text x="1681.5" y="334">EG_2_AW7</text>
<text x="1637.4" y="334">EG_2_AW5</text>
<text x="1599.0" y="334">EG_2_AW8</text>
<text x="1652.0" y="338">EG_3_IW2</text>
<text x="1626.3" y="338">EG_3_IW5</text>
<text x="1575.3" y="338">EG_3_IW7</text>
<text x="1594.6" y="338">EG_3_IW3</text>
<text x="1817.8" y="385">Holzstapel</text>
</g>
<g id="endview">
<rect x="2130.1" y="70.5" width="175.8" height="200.0" fill="#cbddb0"/>
<rect x="2130.3" y="70.5" width="1.6" height="200.0" fill="#0a0a0a"/>
<rect x="2142.0" y="70.5" width="3.2" height="200.0" fill="#0a0a0a"/>
<rect x="2175.2" y="70.5" width="2.0" height="200.0" fill="#8a5a2b"/>
<rect x="2177.2" y="70.5" width="3.0" height="200.0" fill="#c9d4b8"/>
<rect x="2180.2" y="70.5" width="5.3" height="200.0" fill="#0a0a0a"/>
<rect x="2198.4" y="70.5" width="3.0" height="200.0" fill="#0a0a0a"/>
<rect x="2201.4" y="70.5" width="3.2" height="200.0" fill="#f4f4f4"/>
<rect x="2204.6" y="70.5" width="2.8" height="200.0" fill="#fde6d6"/>
<rect x="2204.2" y="70.5" width="0.6" height="200.0" fill="#8a5a2b"/>
<rect x="2206.9" y="70.5" width="0.8" height="200.0" fill="#8a5a2b"/>
<rect x="2216.4" y="70.5" width="2.4" height="200.0" fill="#0a0a0a"/>
<rect x="2248.1" y="70.5" width="4.0" height="200.0" fill="#d2e6e0"/>
<rect x="2247.7" y="70.5" width="0.6" height="200.0" fill="#2f6a6a"/>
<rect x="2252.1" y="70.5" width="2.8" height="200.0" fill="#0a0a0a"/>
<rect x="2259.0" y="70.5" width="1.8" height="200.0" fill="#0a0a0a"/>
<rect x="2282.2" y="70.5" width="5.5" height="200.0" fill="#d5e2d5"/>
<rect x="2281.8" y="70.5" width="0.6" height="200.0" fill="#555"/>
<rect x="2287.7" y="70.5" width="2.4" height="200.0" fill="#4a2e14"/>
<rect x="2290.1" y="70.5" width="2.4" height="200.0" fill="#b08a5a"/>
<rect x="2304.6" y="70.5" width="1.4" height="200.0" fill="#8a5a2b"/>
<rect x="2158.6" y="70.5" width="1.2" height="200.0" fill="#8a5a2b"/>
<rect x="2151.1" y="70.5" width="1.2" height="200.0" fill="#8a5a2b"/>
<rect x="2131.7" y="70.5" width="0.5" height="200.0" fill="#8a6a3a"/>
<rect x="2141.5" y="70.5" width="0.5" height="200.0" fill="#8a6a3a"/>
<rect x="2131.7" y="70.5" width="10.3" height="0.6" fill="#8a6a3a"/>
<rect x="2145.1" y="70.5" width="0.5" height="200.0" fill="#8a6a3a"/>
<rect x="2151.4" y="70.5" width="0.5" height="200.0" fill="#8a6a3a"/>
<rect x="2145.1" y="70.5" width="6.7" height="0.6" fill="#8a6a3a"/>
<rect x="2159.4" y="70.5" width="0.5" height="200.0" fill="#8a6a3a"/>
<rect x="2174.7" y="70.5" width="0.5" height="200.0" fill="#8a6a3a"/>
<rect x="2159.4" y="70.5" width="15.8" height="0.6" fill="#8a6a3a"/>
<rect x="2185.5" y="70.5" width="0.5" height="200.0" fill="#8a6a3a"/>
<rect x="2197.9" y="70.5" width="0.5" height="200.0" fill="#8a6a3a"/>
<rect x="2185.5" y="70.5" width="12.9" height="0.6" fill="#8a6a3a"/>
<rect x="2207.3" y="70.5" width="0.5" height="200.0" fill="#8a6a3a"/>
<rect x="2215.9" y="70.5" width="0.5" height="200.0" fill="#8a6a3a"/>
<rect x="2207.3" y="70.5" width="9.1" height="0.6" fill="#8a6a3a"/>
<rect x="2218.8" y="70.5" width="0.5" height="200.0" fill="#8a6a3a"/>
<rect x="2223.9" y="70.5" width="0.5" height="200.0" fill="#8a6a3a"/>
<rect x="2218.8" y="70.5" width="5.5" height="0.6" fill="#8a6a3a"/>
<rect x="2231.5" y="70.5" width="0.5" height="200.0" fill="#8a6a3a"/>
<rect x="2247.6" y="70.5" width="0.5" height="200.0" fill="#8a6a3a"/>
<rect x="2231.5" y="70.5" width="16.6" height="0.6" fill="#8a6a3a"/>
<rect x="2254.9" y="70.5" width="0.5" height="200.0" fill="#8a6a3a"/>
<rect x="2258.5" y="70.5" width="0.5" height="200.0" fill="#8a6a3a"/>
<rect x="2254.9" y="70.5" width="4.2" height="0.6" fill="#8a6a3a"/>
<rect x="2266.7" y="70.5" width="0.5" height="200.0" fill="#8a6a3a"/>
<rect x="2281.7" y="70.5" width="0.5" height="200.0" fill="#8a6a3a"/>
<rect x="2266.7" y="70.5" width="15.4" height="0.6" fill="#8a6a3a"/>
<rect x="2292.5" y="70.5" width="0.5" height="200.0" fill="#8a6a3a"/>
<rect x="2304.1" y="70.5" width="0.5" height="200.0" fill="#8a6a3a"/>
<rect x="2292.5" y="70.5" width="12.1" height="0.6" fill="#8a6a3a"/>
<rect x="2151.9" y="56.0" width="7.5" height="214.5" fill="#fde6d6" stroke="#7a4e22" stroke-width="0.9"/>
<rect x="2225.5" y="56.0" width="5.5" height="214.5" fill="#fde6d6" stroke="#7a4e22" stroke-width="0.9"/>
<rect x="2260.8" y="56.0" width="5.9" height="214.5" fill="#fde6d6" stroke="#7a4e22" stroke-width="0.9"/>
<rect x="2224.4" y="56.0" width="1.6" height="214.5" fill="#0a0a0a"/>
<rect x="2130.5" y="56.0" width="5.7" height="14.5" fill="#fde6d6" stroke="#8a5a2b" stroke-width="0.8"/>
<rect x="2149.5" y="56.0" width="2.4" height="14.5" fill="#fde6d6" stroke="#0a0a0a" stroke-width="0.8"/>
<rect x="2177.6" y="56.0" width="6.9" height="14.5" fill="#fff" stroke="#0a0a0a" stroke-width="0.8"/>
<rect x="2209.5" y="56.0" width="6.9" height="14.5" fill="#fde6d6" stroke="#8a5a2b" stroke-width="0.8"/>
<rect x="2242.6" y="56.0" width="6.5" height="14.5" fill="#fde6d6" stroke="#333" stroke-width="0.8"/>
<rect x="2272.7" y="56.0" width="6.7" height="14.5" fill="#fff" stroke="#0a0a0a" stroke-width="0.8"/>
<rect x="2133.3" y="56.0" width="0.8" height="14.5" fill="#8a5a2b"/>
<rect x="2246.1" y="56.0" width="0.8" height="14.5" fill="#8a5a2b"/>
<rect x="2274.3" y="56.0" width="0.8" height="14.5" fill="#0a0a0a"/>
<rect x="2176.8" y="72.5" width="3.6" height="4.6" fill="#cfc6bc" stroke="#222" stroke-width="0.7"/>
<rect x="2201.4" y="72.5" width="3.2" height="4.6" fill="#cfc6bc" stroke="#222" stroke-width="0.7"/>
<rect x="2248.1" y="72.5" width="4.0" height="4.6" fill="#cfc6bc" stroke="#222" stroke-width="0.7"/>
<rect x="2282.2" y="72.5" width="5.5" height="4.6" fill="#cfc6bc" stroke="#222" stroke-width="0.7"/>
<rect x="2176.8" y="111.6" width="3.6" height="4.6" fill="#cfc6bc" stroke="#222" stroke-width="0.7"/>
<rect x="2201.4" y="111.6" width="3.2" height="4.6" fill="#cfc6bc" stroke="#222" stroke-width="0.7"/>
<rect x="2248.1" y="111.6" width="4.0" height="4.6" fill="#cfc6bc" stroke="#222" stroke-width="0.7"/>
<rect x="2282.2" y="111.6" width="5.5" height="4.6" fill="#cfc6bc" stroke="#222" stroke-width="0.7"/>
<rect x="2176.8" y="150.4" width="3.6" height="4.6" fill="#cfc6bc" stroke="#222" stroke-width="0.7"/>
<rect x="2201.4" y="150.4" width="3.2" height="4.6" fill="#cfc6bc" stroke="#222" stroke-width="0.7"/>
<rect x="2248.1" y="150.4" width="4.0" height="4.6" fill="#cfc6bc" stroke="#222" stroke-width="0.7"/>
<rect x="2282.2" y="150.4" width="5.5" height="4.6" fill="#cfc6bc" stroke="#222" stroke-width="0.7"/>
<rect x="2176.8" y="189.3" width="3.6" height="4.6" fill="#cfc6bc" stroke="#222" stroke-width="0.7"/>
<rect x="2201.4" y="189.3" width="3.2" height="4.6" fill="#cfc6bc" stroke="#222" stroke-width="0.7"/>
<rect x="2248.1" y="189.3" width="4.0" height="4.6" fill="#cfc6bc" stroke="#222" stroke-width="0.7"/>
<rect x="2282.2" y="189.3" width="5.5" height="4.6" fill="#cfc6bc" stroke="#222" stroke-width="0.7"/>
<rect x="2176.8" y="227.8" width="3.6" height="4.6" fill="#cfc6bc" stroke="#222" stroke-width="0.7"/>
<rect x="2201.4" y="227.8" width="3.2" height="4.6" fill="#cfc6bc" stroke="#222" stroke-width="0.7"/>
<rect x="2248.1" y="227.8" width="4.0" height="4.6" fill="#cfc6bc" stroke="#222" stroke-width="0.7"/>
<rect x="2282.2" y="227.8" width="5.5" height="4.6" fill="#cfc6bc" stroke="#222" stroke-width="0.7"/>
<rect x="2130.1" y="209.1" width="76.8" height="61.4" fill="#f8b683" stroke="#d89660" stroke-width="0.6"/>
<rect x="2121.4" y="31.0" width="8.7" height="240.0" fill="#a29e9b" stroke="#666" stroke-width="0.7"/>
<rect x="2306.3" y="31.0" width="8.7" height="240.0" fill="#a29e9b" stroke="#666" stroke-width="0.7"/>
<rect x="2121.4" y="270.5" width="193.6" height="7.9" fill="#a29e9b" stroke="#666" stroke-width="0.7"/>
<rect x="2121.4" y="278.4" width="15.8" height="62.2" fill="#a29e9b" stroke="#666" stroke-width="0.7"/>
<rect x="2298.8" y="278.4" width="16.2" height="62.2" fill="#a29e9b" stroke="#666" stroke-width="0.7"/>
<rect x="2210.5" y="278.4" width="15.0" height="16.6" fill="#a29e9b" stroke="#666" stroke-width="0.7"/>
</g>
<g id="list" font-size="8.6" font-weight="bold" fill="#111" letter-spacing="0.15">
<text x="2023" y="397" textLength="49" lengthAdjust="spacingAndGlyphs">Ladefläche</text>
<path d="M2023.5 398.5H2376" stroke="#000" stroke-width="1"/>
<text x="2023" y="413" textLength="301" lengthAdjust="spacingAndGlyphs">Erdgeschoss / Wand Mehrschichtig zum Vorführen 1 Gewicht: 640 kg</text>
<text x="2023" y="424" textLength="306" lengthAdjust="spacingAndGlyphs">Erdgeschoss / Wand Mehrschichtig zum Vorführen 11 Gewicht: 651 kg</text>
<text x="2023" y="435" textLength="301" lengthAdjust="spacingAndGlyphs">Erdgeschoss / Wand Mehrschichtig zum Vorführen 9 Gewicht: 700 kg</text>
<text x="2023" y="446" textLength="301" lengthAdjust="spacingAndGlyphs">Erdgeschoss / Wand Mehrschichtig zum Vorführen 2 Gewicht: 713 kg</text>
<text x="2023" y="457" textLength="301" lengthAdjust="spacingAndGlyphs">Erdgeschoss / Wand Mehrschichtig zum Vorführen 3 Gewicht: 823 kg</text>
<text x="2023" y="468" textLength="348" lengthAdjust="spacingAndGlyphs">Erdgeschoss / Innenwand Mehrschichtig 140mm Ständerwerk 3 Gewicht: 425 kg</text>
<text x="2023" y="479" textLength="301" lengthAdjust="spacingAndGlyphs">Erdgeschoss / Wand Mehrschichtig zum Vorführen 4 Gewicht: 864 kg</text>
<text x="2023" y="490" textLength="301" lengthAdjust="spacingAndGlyphs">Erdgeschoss / Wand Mehrschichtig zum Vorführen 8 Gewicht: 714 kg</text>
<text x="2023" y="501" textLength="348" lengthAdjust="spacingAndGlyphs">Erdgeschoss / Innenwand Mehrschichtig 160mm Ständerwerk 7 Gewicht: 316 kg</text>
<text x="2023" y="513" textLength="348" lengthAdjust="spacingAndGlyphs">Erdgeschoss / Innenwand Mehrschichtig 120mm Ständerwerk 5 Gewicht: 353 kg</text>
<text x="2023" y="524" textLength="348" lengthAdjust="spacingAndGlyphs">Erdgeschoss / Innenwand Mehrschichtig 160mm Ständerwerk 2 Gewicht: 646 kg</text>
<text x="2023" y="535" textLength="306" lengthAdjust="spacingAndGlyphs">Erdgeschoss / Wand Mehrschichtig zum Vorführen 7 Gewicht: 1004 kg</text>
<text x="2023" y="546" textLength="301" lengthAdjust="spacingAndGlyphs">Erdgeschoss / Wand Mehrschichtig zum Vorführen 5 Gewicht: 652 kg</text>
<text x="2023" y="557" textLength="182" lengthAdjust="spacingAndGlyphs">Holzstapel / 300 / 100 / 80 Gewicht: 200 kg</text>
<text x="2023" y="568" textLength="159" lengthAdjust="spacingAndGlyphs">Gesamtgewicht der Ladung: 8701 kg</text>
</g>
</svg>
<!-- isometric line drawing -->
<svg class="abs" style="left:1120px;top:440px" width="900" height="469" viewBox="1120 440 900 469">
<g id="iso" fill="#fff" stroke="#222" stroke-width="0.85" stroke-linejoin="round">
<path d="M1270 806A10 14 0 0 0 1272 836M1263 803A10 14 0 0 0 1266 833" fill="none" stroke="#444"/>
<polygon points="1258.4,800.4 1255.4,797.9 1255.4,645.9 1258.4,648.4" stroke="#2a2a2a" stroke-width="0.85"/>
<polygon points="1258.4,800.4 1263.4,799.0 1263.4,647.0 1258.4,648.4" stroke="#2a2a2a" stroke-width="0.85"/>
<polygon points="1258.4,648.4 1263.4,647.0 1260.4,644.4 1255.4,645.9" stroke="#2a2a2a" stroke-width="0.85"/>
<polygon points="1354.6,772.5 1351.6,770.0 1351.6,618.0 1354.6,620.5" stroke="#2a2a2a" stroke-width="0.85"/>
<polygon points="1354.6,772.5 1359.6,771.1 1359.6,619.1 1354.6,620.5" stroke="#2a2a2a" stroke-width="0.85"/>
<polygon points="1354.6,620.5 1359.6,619.1 1356.6,616.5 1351.6,618.0" stroke="#2a2a2a" stroke-width="0.85"/>
<polygon points="1450.8,744.6 1447.8,742.1 1447.8,590.1 1450.8,592.6" stroke="#2a2a2a" stroke-width="0.85"/>
<polygon points="1450.8,744.6 1455.8,743.2 1455.8,591.2 1450.8,592.6" stroke="#2a2a2a" stroke-width="0.85"/>
<polygon points="1450.8,592.6 1455.8,591.2 1452.8,588.6 1447.8,590.1" stroke="#2a2a2a" stroke-width="0.85"/>
<polygon points="1547.0,716.7 1544.0,714.2 1544.0,562.2 1547.0,564.7" stroke="#2a2a2a" stroke-width="0.85"/>
<polygon points="1547.0,716.7 1552.0,715.3 1552.0,563.3 1547.0,564.7" stroke="#2a2a2a" stroke-width="0.85"/>
<polygon points="1547.0,564.7 1552.0,563.3 1549.0,560.7 1544.0,562.2" stroke="#2a2a2a" stroke-width="0.85"/>
<polygon points="1643.2,688.8 1640.2,686.3 1640.2,534.3 1643.2,536.8" stroke="#2a2a2a" stroke-width="0.85"/>
<polygon points="1643.2,688.8 1648.2,687.4 1648.2,535.4 1643.2,536.8" stroke="#2a2a2a" stroke-width="0.85"/>
<polygon points="1643.2,536.8 1648.2,535.4 1645.2,532.8 1640.2,534.3" stroke="#2a2a2a" stroke-width="0.85"/>
<polygon points="1739.4,660.9 1736.4,658.4 1736.4,506.4 1739.4,508.9" stroke="#2a2a2a" stroke-width="0.85"/>
<polygon points="1739.4,660.9 1744.4,659.5 1744.4,507.5 1739.4,508.9" stroke="#2a2a2a" stroke-width="0.85"/>
<polygon points="1739.4,508.9 1744.4,507.5 1741.4,504.9 1736.4,506.4" stroke="#2a2a2a" stroke-width="0.85"/>
<polygon points="1835.6,633.0 1832.6,630.5 1832.6,478.5 1835.6,481.0" stroke="#2a2a2a" stroke-width="0.85"/>
<polygon points="1835.6,633.0 1840.6,631.6 1840.6,479.6 1835.6,481.0" stroke="#2a2a2a" stroke-width="0.85"/>
<polygon points="1835.6,481.0 1840.6,479.6 1837.6,477.0 1832.6,478.5" stroke="#2a2a2a" stroke-width="0.85"/>
<polygon points="1257.9,803.5 1255.1,801.0 1255.1,796.0 1257.9,798.5" stroke="#222" stroke-width="0.85"/>
<polygon points="1257.9,803.5 1840.9,634.4 1840.9,629.4 1257.9,798.5" stroke="#222" stroke-width="0.85"/>
<polygon points="1257.9,798.5 1840.9,629.4 1838.1,627.0 1255.1,796.0" stroke="#222" stroke-width="0.85"/>
<polygon points="1905.7,693.6 1835.2,632.8 1835.2,627.8 1905.7,688.6" stroke="#222" stroke-width="0.85"/>
<polygon points="1905.7,693.6 1908.6,692.8 1908.6,687.8 1905.7,688.6" stroke="#222" stroke-width="0.85"/>
<polygon points="1905.7,688.6 1908.6,687.8 1838.1,627.0 1835.2,627.8" stroke="#222" stroke-width="0.85"/>
<polygon points="1459.0,746.8 1453.2,741.8 1453.2,612.8 1459.0,617.8" stroke="#3a2a1a" stroke-width="0.85"/>
<polygon points="1459.0,746.8 1749.5,662.5 1749.5,533.5 1459.0,617.8" stroke="#3a2a1a" stroke-width="0.85"/>
<polygon points="1459.0,617.8 1749.5,533.5 1743.7,528.5 1453.2,612.8" stroke="#3a2a1a" stroke-width="0.85"/>
<polyline points="1456.1,744.3 1456.1,615.3 1746.6,531.0" fill="none" stroke="#7a4e22" stroke-width="0.8"/>
<polyline points="1459.0,619.8 1749.5,535.5" fill="none" stroke="#7a4e22" stroke-width="0.6"/>
<polygon points="1268.3,807.1 1259.4,799.4 1259.4,674.4 1268.3,682.1" stroke="#2a2a2a" stroke-width="0.85"/>
<polygon points="1268.3,807.1 1460.3,751.4 1460.3,626.4 1268.3,682.1" stroke="#2a2a2a" stroke-width="0.85"/>
<polygon points="1268.3,682.1 1460.3,626.4 1451.4,618.7 1259.4,674.4" stroke="#2a2a2a" stroke-width="0.85"/>
<polyline points="1262.9,802.4 1262.9,677.4 1454.9,621.8" fill="none" stroke="#7a4e22" stroke-width="0.8"/>
<polygon points="1270.3,808.8 1268.3,807.1 1268.3,671.5 1270.3,673.2" stroke="#1a1a1a" stroke-width="0.85"/>
<polygon points="1270.3,808.8 1466.2,752.0 1466.2,616.4 1270.3,673.2" stroke="#1a1a1a" stroke-width="0.85"/>
<polygon points="1270.3,673.2 1466.2,616.4 1464.2,614.7 1268.3,671.5" stroke="#1a1a1a" stroke-width="0.85"/>
<polyline points="1270.3,675.4 1466.2,618.6" fill="none" stroke="#7a4e22" stroke-width="1.0"/>
<polyline points="1270.3,677.4 1466.2,620.6" fill="none" stroke="#9a6a3a" stroke-width="0.6"/>
<polygon points="1515.7,741.1 1506.5,733.2 1506.5,608.2 1515.7,616.1" stroke="#2a2a2a" stroke-width="0.85"/>
<polygon points="1515.7,741.1 1754.4,671.9 1754.4,546.9 1515.7,616.1" stroke="#2a2a2a" stroke-width="0.85"/>
<polygon points="1515.7,616.1 1754.4,546.9 1745.1,539.0 1506.5,608.2" stroke="#2a2a2a" stroke-width="0.85"/>
<polyline points="1510.2,736.4 1510.2,611.4 1748.8,542.2" fill="none" stroke="#7a4e22" stroke-width="0.8"/>
<polygon points="1517.7,742.8 1515.7,741.1 1515.7,605.5 1517.7,607.2" stroke="#1a1a1a" stroke-width="0.85"/>
<polygon points="1517.7,742.8 1771.1,669.4 1771.1,533.8 1517.7,607.2" stroke="#1a1a1a" stroke-width="0.85"/>
<polygon points="1517.7,607.2 1771.1,533.8 1769.1,532.0 1515.7,605.5" stroke="#1a1a1a" stroke-width="0.85"/>
<polyline points="1517.7,609.4 1771.1,536.0" fill="none" stroke="#7a4e22" stroke-width="1.0"/>
<polyline points="1517.7,611.4 1771.1,538.0" fill="none" stroke="#9a6a3a" stroke-width="0.6"/>
<polygon points="1714.2,635.9 1724.4,632.9 1724.4,579.9 1714.2,582.9" stroke="#222"/>
<polygon points="1716.1,632.3 1722.4,630.5 1722.4,583.5 1716.1,585.3" stroke="#7a4e22"/>
<polyline points="1724.4,632.9 1724.4,579.9" fill="none" stroke="#111" stroke-width="1.4"/>
<polygon points="1279.8,817.0 1270.6,809.1 1270.6,684.1 1279.8,692.0" stroke="#2a2a2a" stroke-width="0.85"/>
<polygon points="1279.8,817.0 1487.1,756.9 1487.1,631.9 1279.8,692.0" stroke="#2a2a2a" stroke-width="0.85"/>
<polygon points="1279.8,692.0 1487.1,631.9 1477.9,624.0 1270.6,684.1" stroke="#2a2a2a" stroke-width="0.85"/>
<polyline points="1274.3,812.3 1274.3,687.3 1481.6,627.2" fill="none" stroke="#7a4e22" stroke-width="0.8"/>
<polygon points="1281.8,818.7 1279.8,817.0 1279.8,681.4 1281.8,683.1" stroke="#1a1a1a" stroke-width="0.85"/>
<polygon points="1281.8,818.7 1503.3,754.5 1503.3,618.9 1281.8,683.1" stroke="#1a1a1a" stroke-width="0.85"/>
<polygon points="1281.8,683.1 1503.3,618.9 1501.3,617.2 1279.8,681.4" stroke="#1a1a1a" stroke-width="0.85"/>
<polyline points="1281.8,685.3 1503.3,621.1" fill="none" stroke="#7a4e22" stroke-width="1.0"/>
<polyline points="1281.8,687.3 1503.3,623.1" fill="none" stroke="#9a6a3a" stroke-width="0.6"/>
<polygon points="1515.2,756.0 1506.1,748.1 1506.1,623.1 1515.2,631.0" stroke="#2a2a2a" stroke-width="0.85"/>
<polygon points="1515.2,756.0 1711.2,699.2 1711.2,574.2 1515.2,631.0" stroke="#2a2a2a" stroke-width="0.85"/>
<polygon points="1515.2,631.0 1711.2,574.2 1702.1,566.3 1506.1,623.1" stroke="#2a2a2a" stroke-width="0.85"/>
<polyline points="1509.7,751.3 1509.7,626.3 1705.7,569.4" fill="none" stroke="#7a4e22" stroke-width="0.8"/>
<polygon points="1517.2,757.7 1515.2,756.0 1515.2,620.4 1517.2,622.1" stroke="#1a1a1a" stroke-width="0.85"/>
<polygon points="1517.2,757.7 1714.0,700.6 1714.0,565.0 1517.2,622.1" stroke="#1a1a1a" stroke-width="0.85"/>
<polygon points="1517.2,622.1 1714.0,565.0 1712.0,563.3 1515.2,620.4" stroke="#1a1a1a" stroke-width="0.85"/>
<polyline points="1517.2,624.3 1714.0,567.2" fill="none" stroke="#7a4e22" stroke-width="1.0"/>
<polyline points="1517.2,626.3 1714.0,569.2" fill="none" stroke="#9a6a3a" stroke-width="0.6"/>
<polygon points="1306.8,824.1 1296.9,815.6 1296.9,690.6 1306.8,699.1" stroke="#2a2a2a" stroke-width="0.85"/>
<polygon points="1306.8,824.1 1514.0,764.0 1514.0,639.0 1306.8,699.1" stroke="#2a2a2a" stroke-width="0.85"/>
<polygon points="1306.8,699.1 1514.0,639.0 1504.1,630.5 1296.9,690.6" stroke="#2a2a2a" stroke-width="0.85"/>
<polyline points="1300.8,819.0 1300.8,694.0 1508.1,633.9" fill="none" stroke="#7a4e22" stroke-width="0.8"/>
<polygon points="1297.5,829.1 1295.5,827.4 1295.5,691.8 1297.5,693.5" stroke="#1a1a1a" stroke-width="0.85"/>
<polygon points="1297.5,829.1 1516.0,765.7 1516.0,630.1 1297.5,693.5" stroke="#1a1a1a" stroke-width="0.85"/>
<polygon points="1297.5,693.5 1516.0,630.1 1514.0,628.4 1295.5,691.8" stroke="#1a1a1a" stroke-width="0.85"/>
<polyline points="1297.5,695.7 1516.0,632.3" fill="none" stroke="#7a4e22" stroke-width="1.0"/>
<polyline points="1297.5,697.7 1516.0,634.3" fill="none" stroke="#9a6a3a" stroke-width="0.6"/>
<polygon points="1521.1,765.1 1515.9,760.6 1515.9,631.6 1521.1,636.1" stroke="#3a2a1a" stroke-width="0.85"/>
<polygon points="1521.1,765.1 1701.6,712.7 1701.6,583.7 1521.1,636.1" stroke="#3a2a1a" stroke-width="0.85"/>
<polygon points="1521.1,636.1 1701.6,583.7 1696.3,579.2 1515.9,631.6" stroke="#3a2a1a" stroke-width="0.85"/>
<polyline points="1518.5,762.8 1518.5,633.8 1698.9,581.5" fill="none" stroke="#7a4e22" stroke-width="0.8"/>
<polyline points="1521.1,638.1 1701.6,585.7" fill="none" stroke="#7a4e22" stroke-width="0.6"/>
<polygon points="1500.0,780.8 1493.2,774.9 1493.2,645.9 1500.0,651.8" stroke="#3a2a1a" stroke-width="0.85"/>
<polygon points="1500.0,780.8 1643.7,739.2 1643.7,610.2 1500.0,651.8" stroke="#3a2a1a" stroke-width="0.85"/>
<polygon points="1500.0,651.8 1643.7,610.2 1636.8,604.3 1493.2,645.9" stroke="#3a2a1a" stroke-width="0.85"/>
<polyline points="1496.6,777.9 1496.6,648.9 1640.2,607.2" fill="none" stroke="#7a4e22" stroke-width="0.8"/>
<polyline points="1500.0,653.8 1643.7,612.2" fill="none" stroke="#7a4e22" stroke-width="0.6"/>
<polygon points="1303.1,837.0 1295.2,830.3 1295.2,705.3 1303.1,712.0" stroke="#2a2a2a" stroke-width="0.85"/>
<polygon points="1303.1,837.0 1495.1,781.4 1495.1,656.4 1303.1,712.0" stroke="#2a2a2a" stroke-width="0.85"/>
<polygon points="1303.1,712.0 1495.1,656.4 1487.2,649.6 1295.2,705.3" stroke="#2a2a2a" stroke-width="0.85"/>
<polyline points="1298.3,833.0 1298.3,708.0 1490.4,652.3" fill="none" stroke="#7a4e22" stroke-width="0.8"/>
<polygon points="1305.0,838.7 1303.1,837.0 1303.1,701.4 1305.0,703.1" stroke="#1a1a1a" stroke-width="0.85"/>
<polygon points="1305.0,838.7 1500.8,782.0 1500.8,646.4 1305.0,703.1" stroke="#1a1a1a" stroke-width="0.85"/>
<polygon points="1305.0,703.1 1500.8,646.4 1498.8,644.7 1303.1,701.4" stroke="#1a1a1a" stroke-width="0.85"/>
<polyline points="1305.0,705.3 1500.8,648.6" fill="none" stroke="#7a4e22" stroke-width="1.0"/>
<polyline points="1305.0,707.3 1500.8,650.6" fill="none" stroke="#9a6a3a" stroke-width="0.6"/>
<polygon points="1522.5,784.1 1514.1,776.9 1514.1,651.9 1522.5,659.1" stroke="#2a2a2a" stroke-width="0.85"/>
<polygon points="1522.5,784.1 1698.5,733.1 1698.5,608.1 1522.5,659.1" stroke="#2a2a2a" stroke-width="0.85"/>
<polygon points="1522.5,659.1 1698.5,608.1 1690.1,600.8 1514.1,651.9" stroke="#2a2a2a" stroke-width="0.85"/>
<polyline points="1517.4,779.8 1517.4,654.8 1693.4,603.7" fill="none" stroke="#7a4e22" stroke-width="0.8"/>
<polygon points="1513.9,788.9 1511.9,787.2 1511.9,651.6 1513.9,653.3" stroke="#1a1a1a" stroke-width="0.85"/>
<polygon points="1513.9,788.9 1700.4,734.8 1700.4,599.2 1513.9,653.3" stroke="#1a1a1a" stroke-width="0.85"/>
<polygon points="1513.9,653.3 1700.4,599.2 1698.5,597.5 1511.9,651.6" stroke="#1a1a1a" stroke-width="0.85"/>
<polyline points="1513.9,655.5 1700.4,601.4" fill="none" stroke="#7a4e22" stroke-width="1.0"/>
<polyline points="1513.9,657.5 1700.4,603.4" fill="none" stroke="#9a6a3a" stroke-width="0.6"/>
<polygon points="1313.4,846.0 1305.1,838.8 1305.1,713.8 1313.4,721.0" stroke="#2a2a2a" stroke-width="0.85"/>
<polygon points="1313.4,846.0 1509.4,789.2 1509.4,664.2 1313.4,721.0" stroke="#2a2a2a" stroke-width="0.85"/>
<polygon points="1313.4,721.0 1509.4,664.2 1501.1,657.0 1305.1,713.8" stroke="#2a2a2a" stroke-width="0.85"/>
<polyline points="1308.4,841.7 1308.4,716.7 1504.4,659.9" fill="none" stroke="#7a4e22" stroke-width="0.8"/>
<polygon points="1315.4,847.7 1313.4,846.0 1313.4,710.4 1315.4,712.1" stroke="#1a1a1a" stroke-width="0.85"/>
<polygon points="1315.4,847.7 1511.3,790.9 1511.3,655.3 1315.4,712.1" stroke="#1a1a1a" stroke-width="0.85"/>
<polygon points="1315.4,712.1 1511.3,655.3 1509.4,653.6 1313.4,710.4" stroke="#1a1a1a" stroke-width="0.85"/>
<polyline points="1315.4,714.3 1511.3,657.5" fill="none" stroke="#7a4e22" stroke-width="1.0"/>
<polyline points="1315.4,716.3 1511.3,659.5" fill="none" stroke="#9a6a3a" stroke-width="0.6"/>
<polygon points="1325.3,850.9 1320.3,846.6 1320.3,721.6 1325.3,725.9" stroke="#2a2a2a" stroke-width="0.85"/>
<polygon points="1325.3,850.9 1516.6,795.4 1516.6,670.4 1325.3,725.9" stroke="#2a2a2a" stroke-width="0.85"/>
<polygon points="1325.3,725.9 1516.6,670.4 1511.6,666.1 1320.3,721.6" stroke="#2a2a2a" stroke-width="0.85"/>
<polyline points="1322.3,848.3 1322.3,723.3 1513.6,667.8" fill="none" stroke="#7a4e22" stroke-width="0.8"/>
<polygon points="1323.7,853.7 1321.7,852.0 1321.7,716.4 1323.7,718.1" stroke="#1a1a1a" stroke-width="0.85"/>
<polygon points="1323.7,853.7 1518.6,797.1 1518.6,661.5 1323.7,718.1" stroke="#1a1a1a" stroke-width="0.85"/>
<polygon points="1323.7,718.1 1518.6,661.5 1516.6,659.8 1321.7,716.4" stroke="#1a1a1a" stroke-width="0.85"/>
<polyline points="1323.7,720.3 1518.6,663.7" fill="none" stroke="#7a4e22" stroke-width="1.0"/>
<polyline points="1323.7,722.3 1518.6,665.7" fill="none" stroke="#9a6a3a" stroke-width="0.6"/>
<polygon points="1374.6,831.8 1466.4,805.2 1466.4,706.6 1374.6,733.2" stroke="#222" stroke-width="0.8"/>
<polyline points="1374.6,828.8 1462.9,803.2" fill="none" stroke="#7a4e22" stroke-width="0.9"/>
<polyline points="1374.6,826.3 1460.1,801.5" fill="none" stroke="#6b4a2e" stroke-width="0.7"/>
<polyline points="1374.6,823.8 1457.2,799.9" fill="none" stroke="#7a4e22" stroke-width="0.9"/>
<polyline points="1374.6,821.3 1454.3,798.2" fill="none" stroke="#333" stroke-width="0.6"/>
<polyline points="1462.6,803.3 1462.6,707.7" fill="none" stroke="#7a4e22" stroke-width="0.7"/>
<polyline points="1459.7,801.9 1459.7,708.5" fill="none" stroke="#6b4a2e" stroke-width="0.7"/>
<polyline points="1456.8,800.5 1456.8,709.4" fill="none" stroke="#7a4e22" stroke-width="0.7"/>
<polyline points="1452.9,798.6 1452.9,710.5" fill="none" stroke="#333" stroke-width="0.7"/>
<polyline points="1374.6,759.2 1452.9,736.5" fill="none" stroke="#333" stroke-width="0.7"/>
<polyline points="1374.6,762.2 1452.9,739.5" fill="none" stroke="#7a4e22" stroke-width="0.7"/>
<polyline points="1374.6,765.2 1452.9,742.5" fill="none" stroke="#7a4e22" stroke-width="0.7"/>
<polyline points="1374.6,768.2 1452.9,745.5" fill="none" stroke="#333" stroke-width="0.7"/>
<polyline points="1391.9,754.2 1391.9,729.2" fill="none" stroke="#7a4e22" stroke-width="0.8"/>
<polyline points="1394.8,753.3 1394.8,728.3" fill="none" stroke="#6b4a2e" stroke-width="0.8"/>
<polyline points="1398.6,752.2 1398.6,727.2" fill="none" stroke="#7a4e22" stroke-width="0.8"/>
<polyline points="1402.5,751.1 1402.5,726.1" fill="none" stroke="#333" stroke-width="0.8"/>
<polyline points="1411.2,748.6 1411.2,723.6" fill="none" stroke="#333" stroke-width="0.8"/>
<polygon points="1748.6,730.5 1720.9,706.6 1720.9,667.6 1748.6,691.5" stroke="#b48a55" stroke-width="0.8"/>
<polygon points="1748.6,730.5 1893.9,688.4 1893.9,649.4 1748.6,691.5" stroke="#b48a55" stroke-width="0.8"/>
<polygon points="1748.6,691.5 1893.9,649.4 1866.1,625.4 1720.9,667.6" stroke="#b48a55" stroke-width="0.8"/>
<polygon points="1518.9,797.2 1513.2,792.2 1513.2,663.2 1518.9,668.2" stroke="#3a2a1a" stroke-width="0.85"/>
<polygon points="1518.9,797.2 1699.6,744.7 1699.6,615.7 1518.9,668.2" stroke="#3a2a1a" stroke-width="0.85"/>
<polygon points="1518.9,668.2 1699.6,615.7 1693.9,610.8 1513.2,663.2" stroke="#3a2a1a" stroke-width="0.85"/>
<polyline points="1516.1,794.7 1516.1,665.7 1696.8,613.3" fill="none" stroke="#7a4e22" stroke-width="0.8"/>
<polyline points="1518.9,670.2 1699.6,617.7" fill="none" stroke="#7a4e22" stroke-width="0.6"/>
<polyline points="1579.5,779.6 1579.5,650.6" fill="none" stroke="#5a4634" stroke-width="0.6"/>
<polyline points="1640.5,761.9 1640.5,632.9" fill="none" stroke="#5a4634" stroke-width="0.6"/>
<polygon points="1325.6,861.8 1255.1,801.0 1255.1,796.0 1325.6,856.8" stroke="#222" stroke-width="0.85"/>
<polygon points="1325.6,861.8 1328.5,861.0 1328.5,856.0 1325.6,856.8" stroke="#222" stroke-width="0.85"/>
<polygon points="1325.6,856.8 1328.5,856.0 1258.0,795.2 1255.1,796.0" stroke="#222" stroke-width="0.85"/>
<polygon points="1325.6,861.8 1322.8,859.4 1322.8,854.4 1325.6,856.8" stroke="#222" stroke-width="0.85"/>
<polygon points="1325.6,861.8 1908.6,692.8 1908.6,687.8 1325.6,856.8" stroke="#222" stroke-width="0.85"/>
<polygon points="1325.6,856.8 1908.6,687.8 1905.8,685.3 1322.8,854.4" stroke="#222" stroke-width="0.85"/>
<polygon points="1287.5,827.0 1237.5,841.5 1243.2,846.4 1293.2,831.9"/>
<polygon points="1293.2,831.9 1243.2,846.4 1243.2,856.4 1293.2,841.9"/>
<polygon points="1243.2,846.4 1237.5,841.5 1237.5,851.5 1243.2,856.4"/>
<ellipse cx="1349.5" cy="874" rx="22.5" ry="21" stroke="#444"/>
<path d="M1341 855A22 21 0 0 0 1345 894.5" fill="none" stroke="#444"/>
<ellipse cx="1879.5" cy="721" rx="22" ry="20" stroke="#444"/>
<path d="M1871 702.5A22 20 0 0 0 1875 740.5" fill="none" stroke="#444"/>
<polygon points="1325.6,861.8 1322.8,859.4 1322.8,854.4 1325.6,856.8" stroke="#222" stroke-width="0.85"/>
<polygon points="1325.6,861.8 1908.6,692.8 1908.6,687.8 1325.6,856.8" stroke="#222" stroke-width="0.85"/>
<polygon points="1325.6,856.8 1908.6,687.8 1905.8,685.3 1322.8,854.4" stroke="#222" stroke-width="0.85"/>
<polygon points="1326.1,858.8 1323.1,856.2 1323.1,704.2 1326.1,706.8" stroke="#2a2a2a" stroke-width="0.85"/>
<polygon points="1326.1,858.8 1331.1,857.3 1331.1,705.3 1326.1,706.8" stroke="#2a2a2a" stroke-width="0.85"/>
<polygon points="1326.1,706.8 1331.1,705.3 1328.1,702.8 1323.1,704.2" stroke="#2a2a2a" stroke-width="0.85"/>
<polygon points="1422.3,830.9 1419.3,828.3 1419.3,676.3 1422.3,678.9" stroke="#2a2a2a" stroke-width="0.85"/>
<polygon points="1422.3,830.9 1427.3,829.4 1427.3,677.4 1422.3,678.9" stroke="#2a2a2a" stroke-width="0.85"/>
<polygon points="1422.3,678.9 1427.3,677.4 1424.3,674.9 1419.3,676.3" stroke="#2a2a2a" stroke-width="0.85"/>
<polygon points="1518.5,803.0 1515.5,800.4 1515.5,648.4 1518.5,651.0" stroke="#2a2a2a" stroke-width="0.85"/>
<polygon points="1518.5,803.0 1523.5,801.5 1523.5,649.5 1518.5,651.0" stroke="#2a2a2a" stroke-width="0.85"/>
<polygon points="1518.5,651.0 1523.5,649.5 1520.5,647.0 1515.5,648.4" stroke="#2a2a2a" stroke-width="0.85"/>
<polygon points="1614.7,775.1 1611.7,772.5 1611.7,620.5 1614.7,623.1" stroke="#2a2a2a" stroke-width="0.85"/>
<polygon points="1614.7,775.1 1619.7,773.6 1619.7,621.6 1614.7,623.1" stroke="#2a2a2a" stroke-width="0.85"/>
<polygon points="1614.7,623.1 1619.7,621.6 1616.7,619.1 1611.7,620.5" stroke="#2a2a2a" stroke-width="0.85"/>
<polygon points="1710.9,747.2 1707.9,744.6 1707.9,592.6 1710.9,595.2" stroke="#2a2a2a" stroke-width="0.85"/>
<polygon points="1710.9,747.2 1715.9,745.7 1715.9,593.7 1710.9,595.2" stroke="#2a2a2a" stroke-width="0.85"/>
<polygon points="1710.9,595.2 1715.9,593.7 1712.9,591.2 1707.9,592.6" stroke="#2a2a2a" stroke-width="0.85"/>
<polygon points="1807.1,719.3 1804.1,716.7 1804.1,564.7 1807.1,567.3" stroke="#2a2a2a" stroke-width="0.85"/>
<polygon points="1807.1,719.3 1812.1,717.8 1812.1,565.8 1807.1,567.3" stroke="#2a2a2a" stroke-width="0.85"/>
<polygon points="1807.1,567.3 1812.1,565.8 1809.1,563.3 1804.1,564.7" stroke="#2a2a2a" stroke-width="0.85"/>
<polygon points="1903.3,691.4 1900.3,688.8 1900.3,536.8 1903.3,539.4" stroke="#2a2a2a" stroke-width="0.85"/>
<polygon points="1903.3,691.4 1908.3,689.9 1908.3,537.9 1903.3,539.4" stroke="#2a2a2a" stroke-width="0.85"/>
<polygon points="1903.3,539.4 1908.3,537.9 1905.3,535.4 1900.3,536.8" stroke="#2a2a2a" stroke-width="0.85"/>
</g>
</svg>
</body>
</html>
